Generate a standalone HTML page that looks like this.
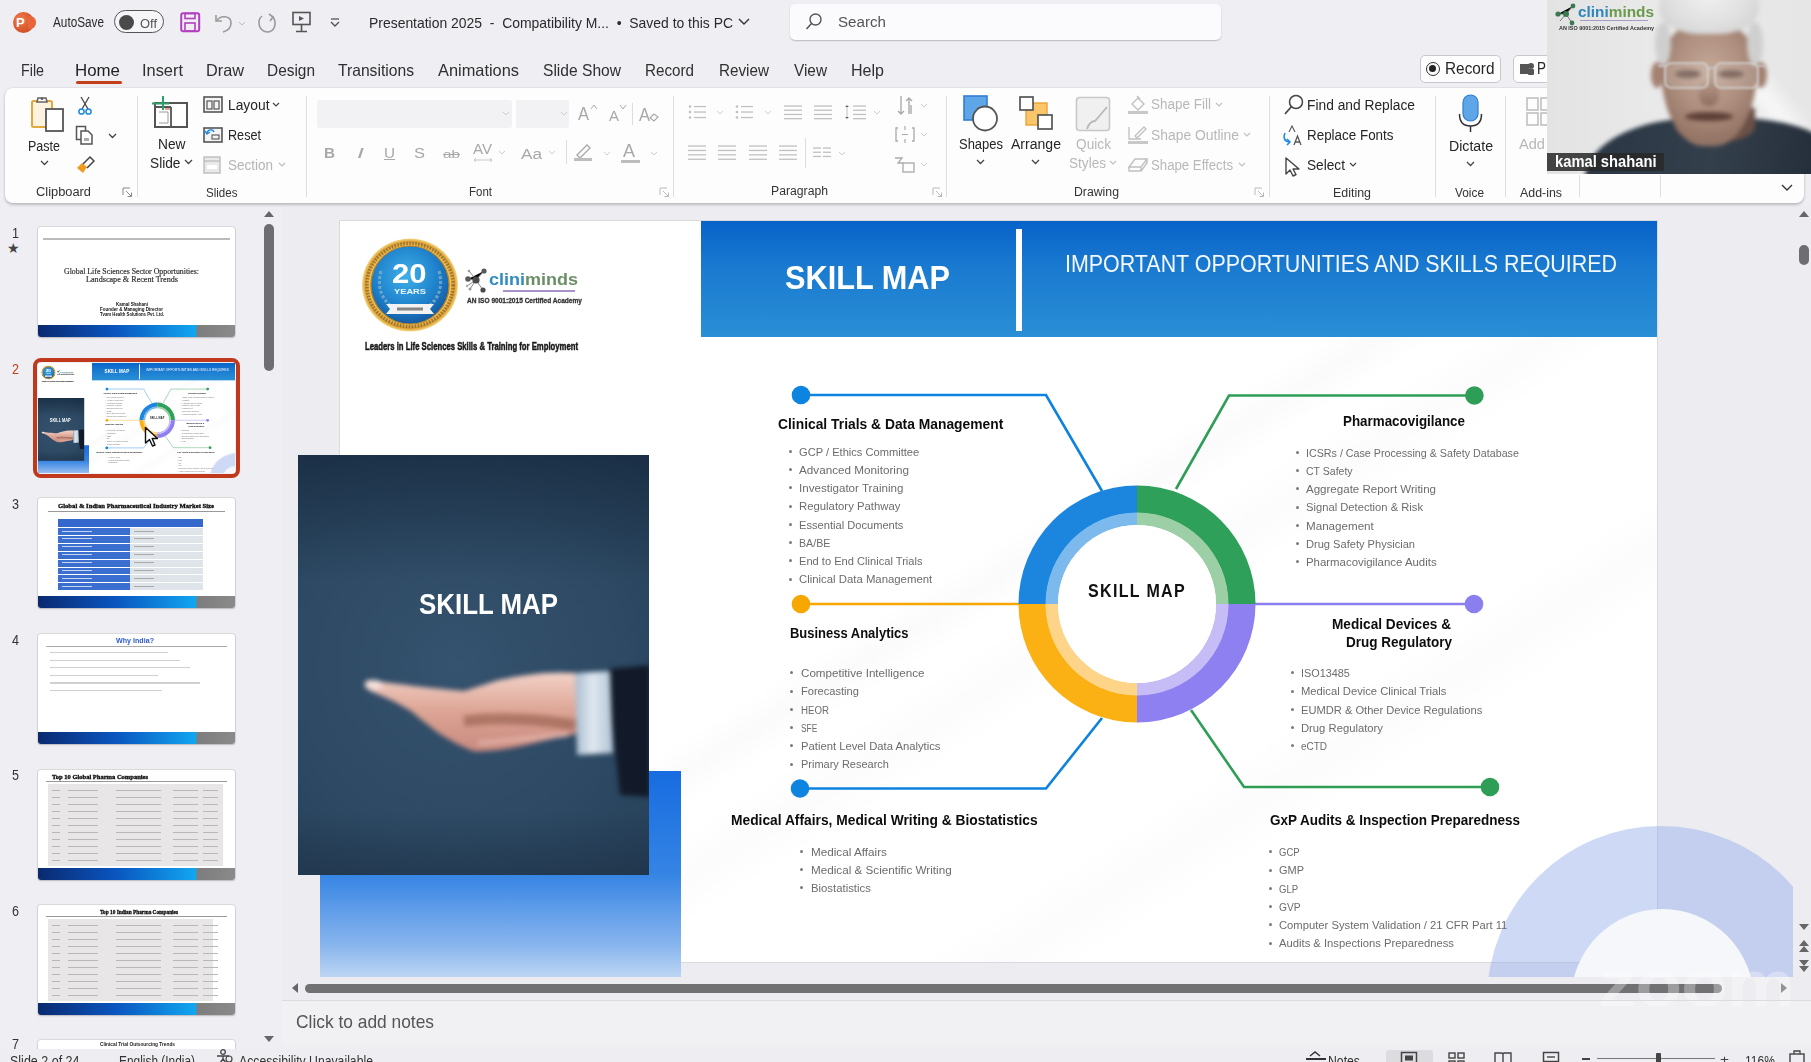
<!DOCTYPE html><html><head><meta charset="utf-8"><style>
*{margin:0;padding:0}
html,body{width:1811px;height:1062px;overflow:hidden;background:#eeeef3;font-family:"Liberation Sans",sans-serif}
.a{position:absolute}
.t{position:absolute;white-space:nowrap;line-height:1;transform-origin:0 0}
</style></head><body><div class="a" style="left:0;top:0;width:1811px;height:1062px;background:#eeeef3"></div><div class="a" style="left:13px;top:12px;width:21px;height:21px;border-radius:50%;background:radial-gradient(circle at 35% 35%,#f27a4a,#c4401a)"></div><div class="a" style="left:28px;top:16px;width:8px;height:13px;border-radius:0 6px 6px 0;background:#e8643a"></div><span class="a" style="left:16px;top:13px;font:bold 13px/19px 'Liberation Sans';color:#fff">P</span><span class="t" id="x52" style="transform:scaleX(0.8522);left:53.0px;top:16.3px;font-size:13.81px;color:#2b2b2b;">AutoSave</span><div class="a" style="left:114px;top:10px;width:48px;height:21px;border:1.5px solid #555;border-radius:12px;background:#f6f6f9"></div><div class="a" style="left:119px;top:14.5px;width:15px;height:15px;border-radius:50%;background:#4a4a4a"></div><span class="t" id="x53" style="transform:scaleX(0.9873);left:140.0px;top:16.9px;font-size:13.08px;color:#555;">Off</span><svg class="a" style="left:180px;top:12px" width="22" height="21"><rect x="1.2" y="1.2" width="18" height="18" rx="2" fill="none" stroke="#b23fc0" stroke-width="2"/><rect x="5" y="1.5" width="10" height="5" fill="none" stroke="#b23fc0" stroke-width="1.6"/><rect x="5" y="11" width="10" height="8" fill="none" stroke="#b23fc0" stroke-width="1.6"/></svg><svg class="a" style="left:212px;top:12px" width="36" height="22"><path d="M4 3 L4 9 L10 9" stroke="#9a9a9a" stroke-width="1.6" fill="none"/><path d="M4.5 9 C8 3,19 3,19 11 C19 16,15 19,11 20" stroke="#9a9a9a" stroke-width="1.6" fill="none"/><path d="M27 10 L30 13 L33 10" stroke="#bbb" stroke-width="1" fill="none"/></svg><svg class="a" style="left:256px;top:11px" width="24" height="24"><path d="M6 5 C1 9,2 20,11 21 C19 21,21 12,17 6" stroke="#9a9a9a" stroke-width="1.6" fill="none"/><path d="M13 3 L17 6 L14 10" stroke="#9a9a9a" stroke-width="1.6" fill="none"/></svg><svg class="a" style="left:291px;top:11px" width="22" height="22"><rect x="2" y="1.5" width="17" height="12" fill="none" stroke="#555" stroke-width="1.6"/><path d="M8 5 L13 7.5 L8 10Z" fill="#555"/><path d="M10.5 14 L10.5 20 M5 20.5 L16 20.5" stroke="#555" stroke-width="1.6"/></svg><svg class="a" style="left:329px;top:17px" width="12" height="12"><path d="M2 2 L10 2" stroke="#555" stroke-width="1.3"/><path d="M2 5 L6 9 L10 5" stroke="#555" stroke-width="1.4" fill="none"/></svg><span class="t" id="x54" style="transform:scaleX(0.9303);left:368.5px;top:15.8px;font-size:14.97px;color:#2b2b2b;">Presentation 2025&nbsp; -&nbsp; Compatibility M...&nbsp; •&nbsp; Saved to this PC</span><svg class="a" style="left:738.0px;top:18.0px" width="12" height="8"><path d="M1 1 L6.0 6.0 L11.0 1" stroke="#333" stroke-width="1.4" fill="none"/></svg><div class="a" style="left:790px;top:4px;width:431px;height:36px;border-radius:5px;background:#fbfbfd;box-shadow:0 1px 1.5px rgba(0,0,0,.22)"></div><svg class="a" style="left:804px;top:12px" width="20" height="20"><circle cx="11.5" cy="7.5" r="5.5" stroke="#555" stroke-width="1.4" fill="none"/><path d="M7.5 11.5 L2.5 17" stroke="#555" stroke-width="1.5"/></svg><span class="t" id="x55" style="transform:scaleX(0.9932);left:837.5px;top:14.1px;font-size:15.26px;color:#555;">Search</span><span class="t" id="x56" style="transform:scaleX(0.8772);left:21.0px;top:61.7px;font-size:16.28px;color:#303030;">File</span><span class="t" id="x57" style="transform:scaleX(1.0371);left:75.0px;top:61.7px;font-size:16.28px;color:#1f1f1f;">Home</span><span class="t" id="x58" style="transform:scaleX(1.0077);left:142.0px;top:61.7px;font-size:16.28px;color:#303030;">Insert</span><span class="t" id="x59" style="transform:scaleX(1.0008);left:206.0px;top:61.7px;font-size:16.28px;color:#303030;">Draw</span><span class="t" id="x60" style="transform:scaleX(0.9479);left:267.0px;top:61.7px;font-size:16.28px;color:#303030;">Design</span><span class="t" id="x61" style="transform:scaleX(0.9626);left:338.0px;top:61.7px;font-size:16.28px;color:#303030;">Transitions</span><span class="t" id="x62" style="transform:scaleX(1.0066);left:438.0px;top:61.7px;font-size:16.28px;color:#303030;">Animations</span><span class="t" id="x63" style="transform:scaleX(0.9583);left:543.0px;top:61.7px;font-size:16.28px;color:#303030;">Slide Show</span><span class="t" id="x64" style="transform:scaleX(0.9344);left:645.0px;top:61.7px;font-size:16.28px;color:#303030;">Record</span><span class="t" id="x65" style="transform:scaleX(0.9373);left:719.0px;top:61.7px;font-size:16.28px;color:#303030;">Review</span><span class="t" id="x66" style="transform:scaleX(0.9437);left:794.0px;top:61.7px;font-size:16.28px;color:#303030;">View</span><span class="t" id="x67" style="transform:scaleX(0.9865);left:851.0px;top:61.7px;font-size:16.28px;color:#303030;">Help</span><div class="a" style="left:75.5px;top:81px;width:46px;height:3px;border-radius:2px;background:#c43e1c"></div><div class="a" style="left:1420px;top:55px;width:81px;height:28px;border-radius:5px;border:1px solid #c8c8cc;background:#fdfdfd;box-sizing:border-box"></div><div class="a" style="left:1425.5px;top:61.5px;width:14px;height:14px;border-radius:50%;border:1.5px solid #333;box-sizing:border-box"></div><div class="a" style="left:1429px;top:65px;width:7px;height:7px;border-radius:50%;background:#222"></div><span class="t" id="x68" style="transform:scaleX(0.9606);left:1445.0px;top:61.0px;font-size:15.99px;color:#262626;">Record</span><div class="a" style="left:1513px;top:55px;width:40px;height:28px;border-radius:5px;border:1px solid #c8c8cc;background:#fdfdfd;box-sizing:border-box"></div><svg class="a" style="left:1519px;top:61px" width="16" height="16"><rect x="1" y="3" width="9" height="10" fill="#555"/><circle cx="12" cy="5" r="3" fill="#555"/><rect x="9" y="8" width="6" height="6" rx="1" fill="#555"/></svg><span class="t" id="x69" style="transform:scaleX(0.8433);left:1537.0px;top:61.0px;font-size:15.99px;color:#262626;">P</span><div class="a" style="left:282px;top:205px;width:1529px;height:795px;background:#ededf1"></div><div class="a" style="left:282px;top:1001px;width:1529px;height:44px;background:#f1f1f4"></div><div class="a" style="left:0;top:205px;width:282px;height:840px;background:#efeff3"></div><div class="a" style="left:282px;top:205px;width:1511px;height:772px;overflow:hidden"><div class="a" style="left:58px;top:16px;width:1317px;height:741px;box-shadow:0 0 0 1px rgba(0,0,0,.08)"><div class="a" style="left:0;top:0;width:1317px;height:741px;background:#fff;overflow:hidden"><div class="a" style="left:-200px;top:300px;width:1800px;height:60px;transform:rotate(-32deg);background:linear-gradient(rgba(230,232,238,0),rgba(228,230,236,.18),rgba(230,232,238,0))"></div><div class="a" style="left:200px;top:420px;width:1800px;height:90px;transform:rotate(-32deg);background:linear-gradient(rgba(230,232,238,0),rgba(230,232,238,.15),rgba(230,232,238,0))"></div><div class="a" style="left:-400px;top:520px;width:1800px;height:80px;transform:rotate(-32deg);background:linear-gradient(rgba(230,232,238,0),rgba(230,232,238,.15),rgba(230,232,238,0))"></div></div><div class="a" style="left:1147px;top:605px;width:348px;height:348px;border-radius:50%;background:rgba(150,175,235,.47)"></div><div class="a" style="left:1230.5px;top:687.5px;width:183px;height:183px;border-radius:50%;background:#f6f7fa"></div><div class="a" style="left:361px;top:0;width:956px;height:116px;background:linear-gradient(#0763c9,#1a7ad0 40%,#2a8fd6)"></div><div class="a" style="left:676px;top:8px;width:6px;height:102px;background:#fff"></div><span class="t" id="x1" style="transform:scaleX(0.9073);left:445.0px;top:39.6px;font-size:33.87px;color:#fff;font-weight:bold;">SKILL MAP</span><span class="t" id="x2" style="transform:scaleX(0.9215);left:724.6px;top:32.1px;font-size:23.26px;color:#f4f8ff;">IMPORTANT OPPORTUNITIES AND SKILLS REQUIRED</span><svg class="a" style="left:20.7px;top:14.7px" width="98" height="98"><defs><radialGradient id="gold" cx="50%" cy="50%" r="50%"><stop offset=".78" stop-color="#b87a1a"/><stop offset=".84" stop-color="#f0c460"/><stop offset=".93" stop-color="#d89a30"/><stop offset="1" stop-color="#f6dc8a"/></radialGradient><radialGradient id="blu" cx="45%" cy="38%" r="60%"><stop offset="0" stop-color="#3fb0ea"/><stop offset=".7" stop-color="#1d7fca"/><stop offset="1" stop-color="#155fa6"/></radialGradient></defs><ellipse cx="49" cy="49" rx="48" ry="46.5" fill="url(#gold)"/><ellipse cx="49" cy="49" rx="43" ry="41.5" fill="none" stroke="#6a4a18" stroke-width="3.5" stroke-dasharray="1.6 1.4" opacity=".55"/><circle cx="49" cy="49" r="39" fill="url(#blu)" stroke="#b8801e" stroke-width="1.2"/><path d="M20 35 C16 50,20 62,30 70" stroke="#8fb7c8" stroke-width="3" fill="none" stroke-dasharray="3 2" opacity=".7"/><path d="M78 35 C82 50,78 62,68 70" stroke="#8fb7c8" stroke-width="3" fill="none" stroke-dasharray="3 2" opacity=".7"/><path d="M25 68 L73 68 L69 73 L73 78 L25 78 L29 73Z" fill="#f2f2f2"/><rect x="36" y="71.5" width="26" height="3" fill="#555" opacity=".7"/></svg><span class="t" id="x3" style="transform:scaleX(1.1263);left:52.0px;top:38.6px;font-size:27.62px;color:#fff;font-weight:bold;">20</span><span class="t" id="x4" style="transform:scaleX(1.4212);left:54.0px;top:68.0px;font-size:6.54px;color:#eaf4ff;font-weight:bold;">YEARS</span><svg class="a" style="left:124px;top:45px" width="30" height="32"><g stroke="#8a8a8a" stroke-width="1"><path d="M4 13 L12 14 L20 5 M12 14 L19 24 M12 14 L6 23 M5 5 L10 11 M12 14 L3 20"/></g><circle cx="4" cy="13" r="2.8" fill="#5a5a5a"/><circle cx="12" cy="14" r="3.6" fill="#4a4a4a"/><circle cx="20" cy="5" r="2.6" fill="#5a5a5a"/><circle cx="19" cy="24" r="2.6" fill="#4a4a4a"/><circle cx="6" cy="23" r="1.5" fill="#999"/><circle cx="5" cy="5" r="1.3" fill="#999"/><circle cx="3" cy="20" r="1.2" fill="#aaa"/></svg><span class="t" id="x5" style="transform:scaleX(1.0772);left:149.4px;top:50.6px;font-size:16.72px;color:#3d8db5;font-weight:bold;"><span style="color:#2f8cc0">clini</span><span style="color:#6a8f66">minds</span></span><div class="a" style="left:163px;top:69px;width:72px;height:1.5px;background:#8a6fb8;opacity:.75"></div><span class="t" id="x6" style="transform:scaleX(0.9031);left:127.0px;top:76.3px;font-size:7.27px;color:#333;font-weight:bold;-webkit-text-stroke:.3px #333;">AN ISO 9001:2015 Certified Academy</span><span class="t" id="x7" style="transform:scaleX(0.7081);left:24.5px;top:120.4px;font-size:10.90px;color:#1a1a1a;font-weight:bold;-webkit-text-stroke:.5px #1a1a1a;">Leaders in Life Sciences Skills &amp; Training for Employment</span><div class="a" style="left:-20px;top:550px;width:360.5px;height:206px;background:linear-gradient(#176ce0,#3584e4 50%,#8ab6ee 85%,#bcd5f2)"></div><div class="a" style="left:-42.2px;top:234px;width:351.5px;height:420px;overflow:hidden;background:radial-gradient(ellipse 80% 70% at 45% 50%,#35526e,#2d4963 60%,#263f58)"><div class="a" style="left:0;top:0;width:351.5px;height:420px;background:linear-gradient(rgba(18,36,56,.6),rgba(18,36,56,0) 30%,rgba(18,36,56,0) 85%,rgba(18,32,50,.3))"></div><svg class="a" style="left:0;top:0;filter:blur(2.4px)" width="352" height="420"><defs><linearGradient id="hg" x1="0" y1="0" x2="0" y2="1"><stop offset="0" stop-color="#f3d2c8"/><stop offset=".5" stop-color="#dca494"/><stop offset="1" stop-color="#c98a80"/></linearGradient><linearGradient id="cg" x1="0" y1="0" x2="1" y2="0"><stop offset="0" stop-color="#a9bccf"/><stop offset=".45" stop-color="#dfe8f0"/><stop offset="1" stop-color="#b4c4d4"/></linearGradient></defs><path d="M310 214 L352 210 L352 342 L322 340 C318 300,312 260,310 214Z" fill="#121a29"/><path d="M70 225 C90 228,140 234,166 236 C180 232,190 228,201 225 C225 220,250 216,278 218 L278 279 C250 284,225 292,201 295 C190 296,180 297,175 296 C160 290,150 284,139 277 C128 268,120 262,113 256 C100 248,88 242,77 238 C66 234,64 228,70 225Z" fill="url(#hg)"/><path d="M166 266 C200 262,240 264,277 270" stroke="#8a5442" stroke-width="11" fill="none" opacity=".55"/><path d="M180 288 C210 286,240 282,270 280" stroke="#f0c8c0" stroke-width="4" fill="none" opacity=".6"/><ellipse cx="76" cy="230" rx="9" ry="5" fill="#f4e0dc"/><path d="M277 218 L312 216 L315 298 L279 300Z" fill="url(#cg)"/></svg></div><span class="t" id="x8" style="transform:scaleX(0.8773);left:78.6px;top:368.0px;font-size:29.51px;color:#fff;font-weight:bold;">SKILL MAP</span><svg class="a" style="left:0;top:0;overflow:visible" width="1317" height="741"><polyline points="461.0,174.0 706.0,174.0 762.0,270.0" fill="none" stroke="#0d82de" stroke-width="2.6" stroke-linejoin="miter"/><polyline points="1134.4,174.5 889.0,174.5 836.0,268.0" fill="none" stroke="#2e9e56" stroke-width="2.6" stroke-linejoin="miter"/><polyline points="461.0,383.0 690.0,383.0" fill="none" stroke="#f6a800" stroke-width="2.6" stroke-linejoin="miter"/><polyline points="905.0,383.0 1134.0,383.0" fill="none" stroke="#8b7ff0" stroke-width="2.6" stroke-linejoin="miter"/><polyline points="460.0,567.5 706.0,567.5 762.0,497.0" fill="none" stroke="#0d82de" stroke-width="2.6" stroke-linejoin="miter"/><polyline points="1150.0,566.0 904.0,566.0 851.0,489.0" fill="none" stroke="#2e9e56" stroke-width="2.6" stroke-linejoin="miter"/><circle cx="461.0" cy="174.0" r="9.3" fill="#0d84e0"/><circle cx="1134.4" cy="174.5" r="9.3" fill="#2e9e56"/><circle cx="461.0" cy="383.0" r="9.3" fill="#f6a800"/><circle cx="1134.0" cy="383.0" r="9.3" fill="#8b7ff0"/><circle cx="460.0" cy="567.5" r="9.3" fill="#0d84e0"/><circle cx="1150.0" cy="566.0" r="9.3" fill="#2e9e56"/><path d="M678.50 383.00 A118.5 118.5 0 0 1 797.00 264.50 L797.00 292.00 A91.0 91.0 0 0 0 706.00 383.00 Z" fill="#1c86df"/><path d="M797.00 264.50 A118.5 118.5 0 0 1 915.50 383.00 L888.00 383.00 A91.0 91.0 0 0 0 797.00 292.00 Z" fill="#2ea05a"/><path d="M797.00 501.50 A118.5 118.5 0 0 1 678.50 383.00 L706.00 383.00 A91.0 91.0 0 0 0 797.00 474.00 Z" fill="#fbb014"/><path d="M915.50 383.00 A118.5 118.5 0 0 1 797.00 501.50 L797.00 474.00 A91.0 91.0 0 0 0 888.00 383.00 Z" fill="#8e80f1"/><path d="M705.50 383.00 A91.5 91.5 0 0 1 797.00 291.50 L797.00 304.00 A79.0 79.0 0 0 0 718.00 383.00 Z" fill="#7cbaed"/><path d="M797.00 291.50 A91.5 91.5 0 0 1 888.50 383.00 L876.00 383.00 A79.0 79.0 0 0 0 797.00 304.00 Z" fill="#9ccfa6"/><path d="M797.00 474.50 A91.5 91.5 0 0 1 705.50 383.00 L718.00 383.00 A79.0 79.0 0 0 0 797.00 462.00 Z" fill="#fdd488"/><path d="M888.50 383.00 A91.5 91.5 0 0 1 797.00 474.50 L797.00 462.00 A79.0 79.0 0 0 0 876.00 383.00 Z" fill="#c6bdf6"/><circle cx="797" cy="383" r="79" fill="#fff"/></svg><span class="t" id="x9" style="transform:scaleX(0.8768);left:747.5px;top:361.1px;font-size:18.31px;color:#111;font-weight:bold;letter-spacing:1.5px;">SKILL MAP</span><span class="t" id="x10" style="transform:scaleX(0.9331);left:438.4px;top:196.1px;font-size:14.83px;color:#0d0d0d;font-weight:bold;">Clinical Trials &amp; Data Management</span><div class="a" style="left:448.5px;top:228.8px;width:3px;height:3px;border-radius:50%;background:#7a7a7a"></div><span class="t" id="x11" style="transform:scaleX(1.0472);left:459.0px;top:225.5px;font-size:10.61px;color:#6c6c6c;">GCP / Ethics Committee</span><div class="a" style="left:448.5px;top:247.1px;width:3px;height:3px;border-radius:50%;background:#7a7a7a"></div><span class="t" id="x12" style="transform:scaleX(1.1036);left:459.0px;top:243.8px;font-size:10.61px;color:#6c6c6c;">Advanced Monitoring</span><div class="a" style="left:448.5px;top:265.3px;width:3px;height:3px;border-radius:50%;background:#7a7a7a"></div><span class="t" id="x13" style="transform:scaleX(1.0927);left:459.0px;top:262.0px;font-size:10.61px;color:#6c6c6c;">Investigator Training</span><div class="a" style="left:448.5px;top:283.6px;width:3px;height:3px;border-radius:50%;background:#7a7a7a"></div><span class="t" id="x14" style="transform:scaleX(1.0679);left:459.0px;top:280.3px;font-size:10.61px;color:#6c6c6c;">Regulatory Pathway</span><div class="a" style="left:448.5px;top:301.8px;width:3px;height:3px;border-radius:50%;background:#7a7a7a"></div><span class="t" id="x15" style="transform:scaleX(1.0476);left:459.0px;top:298.5px;font-size:10.61px;color:#6c6c6c;">Essential Documents</span><div class="a" style="left:448.5px;top:320.0px;width:3px;height:3px;border-radius:50%;background:#7a7a7a"></div><span class="t" id="x16" style="transform:scaleX(1.0043);left:459.0px;top:316.8px;font-size:10.61px;color:#6c6c6c;">BA/BE</span><div class="a" style="left:448.5px;top:338.3px;width:3px;height:3px;border-radius:50%;background:#7a7a7a"></div><span class="t" id="x17" style="transform:scaleX(1.0472);left:459.0px;top:335.0px;font-size:10.61px;color:#6c6c6c;">End to End Clinical Trials</span><div class="a" style="left:448.5px;top:356.5px;width:3px;height:3px;border-radius:50%;background:#7a7a7a"></div><span class="t" id="x18" style="transform:scaleX(1.0704);left:459.0px;top:353.3px;font-size:10.61px;color:#6c6c6c;">Clinical Data Management</span><span class="t" id="x19" style="transform:scaleX(0.9026);left:1003.0px;top:192.5px;font-size:14.83px;color:#0d0d0d;font-weight:bold;">Pharmacovigilance</span><div class="a" style="left:956.0px;top:229.9px;width:3px;height:3px;border-radius:50%;background:#7a7a7a"></div><span class="t" id="x20" style="transform:scaleX(1.0085);left:966.0px;top:226.6px;font-size:10.61px;color:#6c6c6c;">ICSRs / Case Processing &amp; Safety Database</span><div class="a" style="left:956.0px;top:248.2px;width:3px;height:3px;border-radius:50%;background:#7a7a7a"></div><span class="t" id="x21" style="transform:scaleX(0.9918);left:966.0px;top:244.9px;font-size:10.61px;color:#6c6c6c;">CT Safety</span><div class="a" style="left:956.0px;top:266.4px;width:3px;height:3px;border-radius:50%;background:#7a7a7a"></div><span class="t" id="x22" style="transform:scaleX(1.0876);left:966.0px;top:263.1px;font-size:10.61px;color:#6c6c6c;">Aggregate Report Writing</span><div class="a" style="left:956.0px;top:284.7px;width:3px;height:3px;border-radius:50%;background:#7a7a7a"></div><span class="t" id="x23" style="transform:scaleX(1.0552);left:966.0px;top:281.4px;font-size:10.61px;color:#6c6c6c;">Signal Detection &amp; Risk</span><div class="a" style="left:956.0px;top:302.9px;width:3px;height:3px;border-radius:50%;background:#7a7a7a"></div><span class="t" id="x24" style="transform:scaleX(1.0947);left:966.0px;top:299.6px;font-size:10.61px;color:#6c6c6c;">Management</span><div class="a" style="left:956.0px;top:321.1px;width:3px;height:3px;border-radius:50%;background:#7a7a7a"></div><span class="t" id="x25" style="transform:scaleX(1.0443);left:966.0px;top:317.9px;font-size:10.61px;color:#6c6c6c;">Drug Safety Physician</span><div class="a" style="left:956.0px;top:339.4px;width:3px;height:3px;border-radius:50%;background:#7a7a7a"></div><span class="t" id="x26" style="transform:scaleX(1.0749);left:966.0px;top:336.1px;font-size:10.61px;color:#6c6c6c;">Pharmacovigilance Audits</span><span class="t" id="x27" style="transform:scaleX(0.8749);left:449.5px;top:404.5px;font-size:14.83px;color:#0d0d0d;font-weight:bold;">Business Analytics</span><div class="a" style="left:450.0px;top:450.3px;width:3px;height:3px;border-radius:50%;background:#7a7a7a"></div><span class="t" id="x28" style="transform:scaleX(1.0964);left:461.0px;top:447.0px;font-size:10.61px;color:#6c6c6c;">Competitive Intelligence</span><div class="a" style="left:450.0px;top:468.5px;width:3px;height:3px;border-radius:50%;background:#7a7a7a"></div><span class="t" id="x29" style="transform:scaleX(1.0426);left:461.0px;top:465.3px;font-size:10.61px;color:#6c6c6c;">Forecasting</span><div class="a" style="left:450.0px;top:486.8px;width:3px;height:3px;border-radius:50%;background:#7a7a7a"></div><span class="t" id="x30" style="transform:scaleX(0.9134);left:461.0px;top:483.5px;font-size:10.61px;color:#6c6c6c;">HEOR</span><div class="a" style="left:450.0px;top:505.0px;width:3px;height:3px;border-radius:50%;background:#7a7a7a"></div><span class="t" id="x31" style="transform:scaleX(0.7897);left:461.0px;top:501.8px;font-size:10.61px;color:#6c6c6c;">SFE</span><div class="a" style="left:450.0px;top:523.3px;width:3px;height:3px;border-radius:50%;background:#7a7a7a"></div><span class="t" id="x32" style="transform:scaleX(1.0607);left:461.0px;top:520.0px;font-size:10.61px;color:#6c6c6c;">Patient Level Data Analytics</span><div class="a" style="left:450.0px;top:541.5px;width:3px;height:3px;border-radius:50%;background:#7a7a7a"></div><span class="t" id="x33" style="transform:scaleX(1.0353);left:461.0px;top:538.3px;font-size:10.61px;color:#6c6c6c;">Primary Research</span><span class="t" id="x34" style="transform:scaleX(0.9302);left:391.0px;top:591.5px;font-size:14.83px;color:#0d0d0d;font-weight:bold;">Medical Affairs, Medical Writing &amp; Biostatistics</span><div class="a" style="left:460.2px;top:628.9px;width:3px;height:3px;border-radius:50%;background:#7a7a7a"></div><span class="t" id="x35" style="transform:scaleX(1.1032);left:470.5px;top:625.6px;font-size:10.61px;color:#6c6c6c;">Medical Affairs</span><div class="a" style="left:460.2px;top:647.1px;width:3px;height:3px;border-radius:50%;background:#7a7a7a"></div><span class="t" id="x36" style="transform:scaleX(1.1014);left:470.5px;top:643.9px;font-size:10.61px;color:#6c6c6c;">Medical &amp; Scientific Writing</span><div class="a" style="left:460.2px;top:665.4px;width:3px;height:3px;border-radius:50%;background:#7a7a7a"></div><span class="t" id="x37" style="transform:scaleX(1.0676);left:470.5px;top:662.1px;font-size:10.61px;color:#6c6c6c;">Biostatistics</span><span class="t" id="x38" style="transform:scaleX(0.9196);left:992.0px;top:395.5px;font-size:14.83px;color:#0d0d0d;font-weight:bold;">Medical Devices &amp;</span><span class="t" id="x39" style="transform:scaleX(0.9124);left:1005.6px;top:414.0px;font-size:14.83px;color:#0d0d0d;font-weight:bold;">Drug Regulatory</span><div class="a" style="left:950.5px;top:450.3px;width:3px;height:3px;border-radius:50%;background:#7a7a7a"></div><span class="t" id="x40" style="transform:scaleX(1.0213);left:961.0px;top:447.0px;font-size:10.61px;color:#6c6c6c;">ISO13485</span><div class="a" style="left:950.5px;top:468.5px;width:3px;height:3px;border-radius:50%;background:#7a7a7a"></div><span class="t" id="x41" style="transform:scaleX(1.0577);left:961.0px;top:465.3px;font-size:10.61px;color:#6c6c6c;">Medical Device Clinical Trials</span><div class="a" style="left:950.5px;top:486.8px;width:3px;height:3px;border-radius:50%;background:#7a7a7a"></div><span class="t" id="x42" style="transform:scaleX(1.0488);left:961.0px;top:483.5px;font-size:10.61px;color:#6c6c6c;">EUMDR &amp; Other Device Regulations</span><div class="a" style="left:950.5px;top:505.0px;width:3px;height:3px;border-radius:50%;background:#7a7a7a"></div><span class="t" id="x43" style="transform:scaleX(1.0602);left:961.0px;top:501.8px;font-size:10.61px;color:#6c6c6c;">Drug Regulatory</span><div class="a" style="left:950.5px;top:523.3px;width:3px;height:3px;border-radius:50%;background:#7a7a7a"></div><span class="t" id="x44" style="transform:scaleX(0.9416);left:961.0px;top:520.0px;font-size:10.61px;color:#6c6c6c;">eCTD</span><span class="t" id="x45" style="transform:scaleX(0.9111);left:930.0px;top:591.5px;font-size:14.83px;color:#0d0d0d;font-weight:bold;">GxP Audits &amp; Inspection Preparedness</span><div class="a" style="left:929.2px;top:629.3px;width:3px;height:3px;border-radius:50%;background:#7a7a7a"></div><span class="t" id="x46" style="transform:scaleX(0.8957);left:939.4px;top:626.0px;font-size:10.61px;color:#6c6c6c;">GCP</span><div class="a" style="left:929.2px;top:647.5px;width:3px;height:3px;border-radius:50%;background:#7a7a7a"></div><span class="t" id="x47" style="transform:scaleX(1.0343);left:939.4px;top:644.3px;font-size:10.61px;color:#6c6c6c;">GMP</span><div class="a" style="left:929.2px;top:665.8px;width:3px;height:3px;border-radius:50%;background:#7a7a7a"></div><span class="t" id="x48" style="transform:scaleX(0.9042);left:939.4px;top:662.5px;font-size:10.61px;color:#6c6c6c;">GLP</span><div class="a" style="left:929.2px;top:684.0px;width:3px;height:3px;border-radius:50%;background:#7a7a7a"></div><span class="t" id="x49" style="transform:scaleX(0.9640);left:939.4px;top:680.8px;font-size:10.61px;color:#6c6c6c;">GVP</span><div class="a" style="left:929.2px;top:702.3px;width:3px;height:3px;border-radius:50%;background:#7a7a7a"></div><span class="t" id="x50" style="transform:scaleX(1.0598);left:939.4px;top:699.0px;font-size:10.61px;color:#6c6c6c;">Computer System Validation / 21 CFR Part 11</span><div class="a" style="left:929.2px;top:720.5px;width:3px;height:3px;border-radius:50%;background:#7a7a7a"></div><span class="t" id="x51" style="transform:scaleX(1.0597);left:939.4px;top:717.3px;font-size:10.61px;color:#6c6c6c;">Audits &amp; Inspections Preparedness</span></div></div><div class="a" style="left:5px;top:88px;width:1799px;height:115px;border-radius:8px;background:#fdfdfe;box-shadow:0 1.5px 3px rgba(0,0,0,.2),0 0 0 .5px rgba(0,0,0,.05)"></div><svg class="a" style="left:30.0px;top:96.0px" width="36" height="38"><rect x="2" y="5" width="20" height="26" rx="1.5" fill="#fbf3df" stroke="#e0a93a" stroke-width="2"/><path d="M7 6 L8 2 L16 2 L17 6Z" fill="#fff" stroke="#666" stroke-width="1.6"/><circle cx="12" cy="2.5" r="1.5" fill="#666"/><rect x="16" y="13" width="17" height="22" fill="#fff" stroke="#555" stroke-width="1.8"/></svg><span class="t" id="x70" style="transform:scaleX(0.8438);left:28.0px;top:138.5px;font-size:14.83px;color:#262626;">Paste</span><svg class="a" style="left:39.5px;top:160.0px" width="9" height="6"><path d="M1 1 L4.5 4.5 L8.0 1" stroke="#444" stroke-width="1.3" fill="none"/></svg><svg class="a" style="left:77.0px;top:96.0px" width="16" height="20"><path d="M4 1 L11 13 M12 1 L5 13" stroke="#444" stroke-width="1.3"/><circle cx="4.5" cy="15.5" r="2.6" stroke="#1e88e5" stroke-width="1.5" fill="none"/><circle cx="11.5" cy="15.5" r="2.6" stroke="#1e88e5" stroke-width="1.5" fill="none"/></svg><svg class="a" style="left:75.0px;top:125.0px" width="20" height="21"><rect x="1.5" y="1.5" width="9" height="13" fill="#fff" stroke="#555" stroke-width="1.5"/><path d="M6 6 L13 6 L17 10 L17 19 L6 19Z" fill="#fff" stroke="#555" stroke-width="1.5"/><rect x="9" y="13" width="5" height="3" fill="#aaa"/></svg><svg class="a" style="left:108.0px;top:133.0px" width="9" height="6"><path d="M1 1 L4.5 4.5 L8.0 1" stroke="#444" stroke-width="1.3" fill="none"/></svg><svg class="a" style="left:75.0px;top:155.0px" width="22" height="20"><path d="M2 13 L8 18 L12 12 L7 8Z" fill="#f39a1e"/><path d="M8 9 L15 2 L19 6 L12 13" fill="none" stroke="#444" stroke-width="1.5"/></svg><span class="t" id="x71" style="transform:scaleX(0.9824);left:36.0px;top:185.4px;font-size:13.08px;color:#333;">Clipboard</span><svg class="a" style="left:122.0px;top:187.0px" width="11" height="11"><path d="M1 8 L1 1 L8 1" stroke="#888" stroke-width="1" fill="none"/><path d="M4 4 L9.5 9.5 M5.5 9.5 L9.5 9.5 L9.5 5.5" stroke="#888" stroke-width="1" fill="none"/></svg><div class="a" style="left:137.0px;top:96px;width:1px;height:101px;background:#dedee2"></div><svg class="a" style="left:151.0px;top:95.0px" width="40" height="34"><rect x="4" y="8" width="32" height="24" fill="#fff" stroke="#555" stroke-width="2"/><path d="M4 12 L20 12 M20 12 L20 32" stroke="#555" stroke-width="1.8"/><path d="M8 17 L17 17 L17 28 L8 28" stroke="#999" stroke-width="1" fill="none"/><path d="M12 1 L12 15 M1 8.5 L18 8.5" stroke="#2e9e6a" stroke-width="2"/><path d="M14 14 L19 14" stroke="#d04040" stroke-width="1"/></svg><span class="t" id="x72" style="transform:scaleX(0.9268);left:157.5px;top:136.5px;font-size:14.83px;color:#262626;">New</span><span class="t" id="x73" style="transform:scaleX(0.9247);left:150.0px;top:155.5px;font-size:14.83px;color:#262626;">Slide</span><svg class="a" style="left:184.0px;top:159.0px" width="9" height="6"><path d="M1 1 L4.5 4.5 L8.0 1" stroke="#444" stroke-width="1.3" fill="none"/></svg><svg class="a" style="left:203.0px;top:96.0px" width="20" height="17"><rect x="1" y="1" width="18" height="15" fill="#f4f4f4" stroke="#555" stroke-width="1.6"/><rect x="4" y="5" width="5" height="8" fill="none" stroke="#555" stroke-width="1.2"/><rect x="11" y="5" width="5" height="8" fill="none" stroke="#555" stroke-width="1.2"/></svg><span class="t" id="x74" style="transform:scaleX(0.9319);left:227.5px;top:98.0px;font-size:14.83px;color:#262626;">Layout</span><svg class="a" style="left:272.0px;top:102.0px" width="8" height="6"><path d="M1 1 L4.0 4.0 L7.0 1" stroke="#444" stroke-width="1.2" fill="none"/></svg><svg class="a" style="left:203.0px;top:126.0px" width="20" height="17"><rect x="1" y="2" width="18" height="14" fill="#f4f4f4" stroke="#555" stroke-width="1.6"/><path d="M4 7 C5 3,10 3,11 6" stroke="#1e88e5" stroke-width="1.5" fill="none"/><path d="M2 5 L4 8 L7 6" stroke="#1e88e5" stroke-width="1.4" fill="none"/><rect x="9" y="9" width="7" height="4" fill="none" stroke="#555" stroke-width="1.1"/></svg><span class="t" id="x75" style="transform:scaleX(0.8516);left:228.0px;top:128.0px;font-size:14.83px;color:#262626;">Reset</span><svg class="a" style="left:203.0px;top:156.0px" width="18" height="18"><rect x="1" y="1" width="16" height="16" fill="#e9e9e9" stroke="#c0c0c0" stroke-width="1.5"/><path d="M1 5 L17 5" stroke="#c0c0c0" stroke-width="1.5"/><rect x="4" y="9" width="10" height="4" fill="#fff"/></svg><span class="t" id="x76" style="transform:scaleX(0.9097);left:228.0px;top:158.0px;font-size:14.83px;color:#b5b5b5;">Section</span><svg class="a" style="left:278.0px;top:162.0px" width="8" height="6"><path d="M1 1 L4.0 4.0 L7.0 1" stroke="#bbb" stroke-width="1.1" fill="none"/></svg><span class="t" id="x77" style="transform:scaleX(0.8557);left:205.5px;top:185.6px;font-size:13.52px;color:#333;">Slides</span><div class="a" style="left:306.0px;top:96px;width:1px;height:101px;background:#dedee2"></div><div class="a" style="left:317px;top:100px;width:195px;height:28px;border-radius:3px;background:#f2f2f4"></div><svg class="a" style="left:502.0px;top:111.0px" width="8" height="6"><path d="M1 1 L4.0 4.0 L7.0 1" stroke="#ccc" stroke-width="1" fill="none"/></svg><div class="a" style="left:516px;top:100px;width:53px;height:28px;border-radius:3px;background:#f2f2f4"></div><svg class="a" style="left:560.0px;top:111.0px" width="8" height="6"><path d="M1 1 L4.0 4.0 L7.0 1" stroke="#ccc" stroke-width="1" fill="none"/></svg><span class="t" id="x78" style="transform:scaleX(0.9450);left:578.0px;top:106.2px;font-size:17.44px;color:#a8a8a8;">A</span><span class="t" id="x79" style="transform:scaleX(1.0323);left:609.0px;top:108.7px;font-size:14.53px;color:#a8a8a8;">A</span><svg class="a" style="left:590.0px;top:104.0px" width="8" height="6"><path d="M1 5 L4 1 L7 5" stroke="#aaa" stroke-width="1" fill="none"/></svg><svg class="a" style="left:619.0px;top:104.0px" width="8" height="6"><path d="M1 1 L4 5 L7 1" stroke="#aaa" stroke-width="1" fill="none"/></svg><div class="a" style="left:632px;top:103px;width:1px;height:22px;background:#ddd"></div><span class="t" id="x80" style="transform:scaleX(0.9450);left:639.0px;top:107.2px;font-size:17.44px;color:#a8a8a8;">A</span><svg class="a" style="left:648.0px;top:112.0px" width="12" height="10"><path d="M2 6 L6 2 L10 5 L6 9Z" fill="none" stroke="#aaa" stroke-width="1.2"/></svg><span class="t" id="x81" style="transform:scaleX(0.9986);left:324.0px;top:145.1px;font-size:15.26px;color:#a8a8a8;font-weight:bold;">B</span><span class="t" id="x82" style="transform:scaleX(1.6471);left:357.0px;top:145.1px;font-size:15.26px;color:#a8a8a8;font-style:italic;">I</span><span class="t" id="x83" style="transform:scaleX(0.9986);left:384.0px;top:145.1px;font-size:15.26px;color:#a8a8a8;text-decoration:underline;">U</span><span class="t" id="x84" style="transform:scaleX(1.0814);left:414.0px;top:145.1px;font-size:15.26px;color:#a8a8a8;">S</span><span class="t" id="x85" style="transform:scaleX(1.3140);left:443.0px;top:148.2px;font-size:11.63px;color:#a8a8a8;text-decoration:line-through;">ab</span><span class="t" id="x86" style="transform:scaleX(1.0925);left:473.0px;top:143.3px;font-size:13.81px;color:#a8a8a8;">AV</span><svg class="a" style="left:473.0px;top:157.0px" width="20" height="6"><path d="M1 3 L19 3 M3 1 L1 3 L3 5 M17 1 L19 3 L17 5" stroke="#bbb" stroke-width=".8" fill="none"/></svg><svg class="a" style="left:498.0px;top:150.0px" width="8" height="6"><path d="M1 1 L4.0 4.0 L7.0 1" stroke="#ccc" stroke-width="1" fill="none"/></svg><span class="t" id="x87" style="transform:scaleX(1.1821);left:521.0px;top:146.7px;font-size:14.53px;color:#a8a8a8;">Aa</span><svg class="a" style="left:548.0px;top:150.0px" width="8" height="6"><path d="M1 1 L4.0 4.0 L7.0 1" stroke="#ccc" stroke-width="1" fill="none"/></svg><div class="a" style="left:566px;top:140px;width:1px;height:24px;background:#ddd"></div><svg class="a" style="left:573.0px;top:142.0px" width="22" height="20"><path d="M4 13 L14 3 L17 6 L7 16Z" fill="none" stroke="#aaa" stroke-width="1.4"/><rect x="1" y="16" width="18" height="3" fill="#bdbdbd"/></svg><svg class="a" style="left:603.0px;top:151.0px" width="8" height="6"><path d="M1 1 L4.0 4.0 L7.0 1" stroke="#ccc" stroke-width="1" fill="none"/></svg><span class="t" id="x88" style="transform:scaleX(1.0309);left:623.0px;top:143.2px;font-size:17.44px;color:#a8a8a8;">A</span><svg class="a" style="left:621.0px;top:159.0px" width="22" height="5"><rect x="0" y="1" width="19" height="3" fill="#bdbdbd"/></svg><svg class="a" style="left:650.0px;top:151.0px" width="8" height="6"><path d="M1 1 L4.0 4.0 L7.0 1" stroke="#ccc" stroke-width="1" fill="none"/></svg><span class="t" id="x89" style="transform:scaleX(0.8788);left:469.0px;top:184.9px;font-size:13.08px;color:#333;">Font</span><svg class="a" style="left:659.0px;top:187.0px" width="11" height="11"><path d="M1 8 L1 1 L8 1" stroke="#bbb" stroke-width="1" fill="none"/><path d="M4 4 L9.5 9.5 M5.5 9.5 L9.5 9.5 L9.5 5.5" stroke="#bbb" stroke-width="1" fill="none"/></svg><div class="a" style="left:673.0px;top:96px;width:1px;height:101px;background:#dedee2"></div><svg class="a" style="left:688.0px;top:104.0px" width="20" height="16"><circle cx="2" cy="2.5" r="1.3" fill="#c0c0c0"/><rect x="6" y="1.9" width="12" height="1.3" fill="#c0c0c0"/><circle cx="2" cy="8.0" r="1.3" fill="#c0c0c0"/><rect x="6" y="7.4" width="12" height="1.3" fill="#c0c0c0"/><circle cx="2" cy="13.5" r="1.3" fill="#c0c0c0"/><rect x="6" y="12.9" width="12" height="1.3" fill="#c0c0c0"/></svg><svg class="a" style="left:716.0px;top:110.0px" width="8" height="6"><path d="M1 1 L4.0 4.0 L7.0 1" stroke="#ccc" stroke-width="1" fill="none"/></svg><svg class="a" style="left:735.0px;top:104.0px" width="20" height="16"><circle cx="2" cy="2.5" r="1.3" fill="#c0c0c0"/><rect x="6" y="1.9" width="12" height="1.3" fill="#c0c0c0"/><circle cx="2" cy="8.0" r="1.3" fill="#c0c0c0"/><rect x="6" y="7.4" width="12" height="1.3" fill="#c0c0c0"/><circle cx="2" cy="13.5" r="1.3" fill="#c0c0c0"/><rect x="6" y="12.9" width="12" height="1.3" fill="#c0c0c0"/></svg><svg class="a" style="left:764.0px;top:110.0px" width="8" height="6"><path d="M1 1 L4.0 4.0 L7.0 1" stroke="#ccc" stroke-width="1" fill="none"/></svg><svg class="a" style="left:784.0px;top:104.0px" width="20" height="16"><rect x="0" y="1.4" width="18" height="1.3" fill="#c0c0c0"/><rect x="0" y="5.6" width="18" height="1.3" fill="#c0c0c0"/><rect x="0" y="9.8" width="18" height="1.3" fill="#c0c0c0"/><rect x="0" y="14.0" width="18" height="1.3" fill="#c0c0c0"/></svg><svg class="a" style="left:814.0px;top:104.0px" width="20" height="16"><rect x="0" y="1.4" width="18" height="1.3" fill="#c0c0c0"/><rect x="0" y="5.6" width="18" height="1.3" fill="#c0c0c0"/><rect x="0" y="9.8" width="18" height="1.3" fill="#c0c0c0"/><rect x="0" y="14.0" width="18" height="1.3" fill="#c0c0c0"/></svg><svg class="a" style="left:844.0px;top:104.0px" width="22" height="16"><path d="M3 1 L3 15 M1 3 L3 1 L5 3 M1 13 L3 15 L5 13" stroke="#c0c0c0" stroke-width="1"/><rect x="9" y="1.4" width="13" height="1.3" fill="#c0c0c0"/><rect x="9" y="5.6" width="13" height="1.3" fill="#c0c0c0"/><rect x="9" y="9.8" width="13" height="1.3" fill="#c0c0c0"/><rect x="9" y="14.0" width="13" height="1.3" fill="#c0c0c0"/></svg><svg class="a" style="left:873.0px;top:110.0px" width="8" height="6"><path d="M1 1 L4.0 4.0 L7.0 1" stroke="#ccc" stroke-width="1" fill="none"/></svg><svg class="a" style="left:688.0px;top:144.0px" width="20" height="16"><rect x="0" y="1.4" width="18" height="1.3" fill="#c0c0c0"/><rect x="0" y="5.8" width="18" height="1.3" fill="#c0c0c0"/><rect x="0" y="10.2" width="18" height="1.3" fill="#c0c0c0"/><rect x="0" y="14.6" width="18" height="1.3" fill="#c0c0c0"/></svg><svg class="a" style="left:718.0px;top:144.0px" width="20" height="16"><rect x="0" y="1.4" width="18" height="1.3" fill="#c0c0c0"/><rect x="0" y="5.8" width="18" height="1.3" fill="#c0c0c0"/><rect x="0" y="10.2" width="18" height="1.3" fill="#c0c0c0"/><rect x="0" y="14.6" width="18" height="1.3" fill="#c0c0c0"/></svg><svg class="a" style="left:749.0px;top:144.0px" width="20" height="16"><rect x="0" y="1.4" width="18" height="1.3" fill="#c0c0c0"/><rect x="0" y="5.8" width="18" height="1.3" fill="#c0c0c0"/><rect x="0" y="10.2" width="18" height="1.3" fill="#c0c0c0"/><rect x="0" y="14.6" width="18" height="1.3" fill="#c0c0c0"/></svg><svg class="a" style="left:779.0px;top:144.0px" width="20" height="16"><rect x="0" y="1.4" width="18" height="1.3" fill="#c0c0c0"/><rect x="0" y="5.8" width="18" height="1.3" fill="#c0c0c0"/><rect x="0" y="10.2" width="18" height="1.3" fill="#c0c0c0"/><rect x="0" y="14.6" width="18" height="1.3" fill="#c0c0c0"/></svg><div class="a" style="left:805px;top:138px;width:1px;height:30px;background:#ddd"></div><svg class="a" style="left:813.0px;top:146.0px" width="20" height="14"><rect x="0" y="1.4" width="8" height="1.3" fill="#c0c0c0"/><rect x="0" y="5.6" width="8" height="1.3" fill="#c0c0c0"/><rect x="0" y="9.8" width="8" height="1.3" fill="#c0c0c0"/><g transform="translate(10,0)"><rect x="0" y="1.4" width="8" height="1.3" fill="#c0c0c0"/><rect x="0" y="5.6" width="8" height="1.3" fill="#c0c0c0"/><rect x="0" y="9.8" width="8" height="1.3" fill="#c0c0c0"/></g></svg><svg class="a" style="left:838.0px;top:151.0px" width="8" height="6"><path d="M1 1 L4.0 4.0 L7.0 1" stroke="#ccc" stroke-width="1" fill="none"/></svg><svg class="a" style="left:896.0px;top:95.0px" width="22" height="22"><path d="M5 1 L5 19 M2 16 L5 19 L8 16 M13 19 L13 3 M10 6 L13 3 L16 6 M15 19 L15 10" stroke="#aaa" stroke-width="1.4" fill="none"/></svg><svg class="a" style="left:920.0px;top:103.0px" width="8" height="6"><path d="M1 1 L4.0 4.0 L7.0 1" stroke="#ccc" stroke-width="1" fill="none"/></svg><svg class="a" style="left:894.0px;top:125.0px" width="22" height="18"><path d="M4 3 L2 3 L2 16 L4 16 M18 3 L20 3 L20 16 L18 16" stroke="#aaa" stroke-width="1.3" fill="none"/><path d="M8 9.5 L14 9.5 M11 1 L11 5 M11 14 L11 18" stroke="#aaa" stroke-width="1.2"/></svg><svg class="a" style="left:920.0px;top:132.0px" width="8" height="6"><path d="M1 1 L4.0 4.0 L7.0 1" stroke="#ccc" stroke-width="1" fill="none"/></svg><svg class="a" style="left:894.0px;top:155.0px" width="22" height="18"><path d="M1 3 L8 3 L4 8 L9 8" stroke="#aaa" stroke-width="1.3" fill="none"/><rect x="9" y="8" width="11" height="9" fill="none" stroke="#aaa" stroke-width="1.3"/></svg><svg class="a" style="left:920.0px;top:162.0px" width="8" height="6"><path d="M1 1 L4.0 4.0 L7.0 1" stroke="#ccc" stroke-width="1" fill="none"/></svg><span class="t" id="x90" style="transform:scaleX(0.9332);left:771.0px;top:184.4px;font-size:13.08px;color:#333;">Paragraph</span><svg class="a" style="left:932.0px;top:187.0px" width="11" height="11"><path d="M1 8 L1 1 L8 1" stroke="#bbb" stroke-width="1" fill="none"/><path d="M4 4 L9.5 9.5 M5.5 9.5 L9.5 9.5 L9.5 5.5" stroke="#bbb" stroke-width="1" fill="none"/></svg><div class="a" style="left:945.5px;top:96px;width:1px;height:101px;background:#dedee2"></div><svg class="a" style="left:961.0px;top:94.0px" width="40" height="40"><rect x="3" y="2" width="23" height="24" fill="#5ea6e8" stroke="#2f7fd0" stroke-width="1.6"/><circle cx="24" cy="24.5" r="12" fill="#fff" stroke="#555" stroke-width="1.8"/></svg><span class="t" id="x91" style="transform:scaleX(0.8748);left:959.0px;top:136.5px;font-size:14.83px;color:#262626;">Shapes</span><svg class="a" style="left:976.0px;top:159.0px" width="9" height="6"><path d="M1 1 L4.5 4.5 L8.0 1" stroke="#444" stroke-width="1.3" fill="none"/></svg><svg class="a" style="left:1017.0px;top:95.0px" width="40" height="40"><rect x="9" y="8" width="21" height="22" fill="#fbc66a" stroke="#e8a23a" stroke-width="1.4"/><rect x="3" y="2" width="13" height="13" fill="#fff" stroke="#555" stroke-width="1.7"/><rect x="21" y="20" width="14" height="14" fill="#fff" stroke="#555" stroke-width="1.7"/></svg><span class="t" id="x92" style="transform:scaleX(0.9476);left:1011.0px;top:136.5px;font-size:14.83px;color:#262626;">Arrange</span><svg class="a" style="left:1031.0px;top:159.0px" width="9" height="6"><path d="M1 1 L4.5 4.5 L8.0 1" stroke="#444" stroke-width="1.3" fill="none"/></svg><svg class="a" style="left:1075.0px;top:96.0px" width="38" height="38"><rect x="1.5" y="1.5" width="33" height="33" rx="3" fill="#f0f0f0" stroke="#c8c8c8" stroke-width="1.6"/><path d="M12 33 C14 27,17 25,20 25 L32 11" stroke="#b8b8b8" stroke-width="1.8" fill="none"/></svg><span class="t" id="x93" style="transform:scaleX(0.9233);left:1076.0px;top:136.5px;font-size:14.83px;color:#b8b8b8;">Quick</span><span class="t" id="x94" style="transform:scaleX(0.9161);left:1069.0px;top:155.5px;font-size:14.83px;color:#b8b8b8;">Styles</span><svg class="a" style="left:1109.0px;top:160.0px" width="8" height="6"><path d="M1 1 L4.0 4.0 L7.0 1" stroke="#c0c0c0" stroke-width="1.1" fill="none"/></svg><svg class="a" style="left:1127.0px;top:95.0px" width="22" height="20"><path d="M5 9 L11 3 L17 9 L11 15Z" fill="none" stroke="#c0c0c0" stroke-width="1.4"/><path d="M10 1 L13 4" stroke="#c0c0c0" stroke-width="1.4"/><rect x="1" y="16" width="20" height="3" fill="#c8c8c8"/></svg><span class="t" id="x95" style="transform:scaleX(0.9100);left:1151.0px;top:97.0px;font-size:14.83px;color:#b8b8b8;">Shape Fill</span><svg class="a" style="left:1215.0px;top:102.0px" width="8" height="6"><path d="M1 1 L4.0 4.0 L7.0 1" stroke="#c0c0c0" stroke-width="1.1" fill="none"/></svg><svg class="a" style="left:1127.0px;top:125.0px" width="22" height="20"><path d="M2 2 L2 14 L14 14" stroke="#c0c0c0" stroke-width="1.3" fill="none"/><path d="M8 11 L17 2 L19 4 L10 13Z" fill="none" stroke="#c0c0c0" stroke-width="1.3"/><rect x="1" y="16" width="20" height="3" fill="#c8c8c8"/></svg><span class="t" id="x96" style="transform:scaleX(0.9363);left:1151.0px;top:127.5px;font-size:14.83px;color:#b8b8b8;">Shape Outline</span><svg class="a" style="left:1243.0px;top:132.0px" width="8" height="6"><path d="M1 1 L4.0 4.0 L7.0 1" stroke="#c0c0c0" stroke-width="1.1" fill="none"/></svg><svg class="a" style="left:1127.0px;top:155.0px" width="22" height="20"><path d="M2 12 L8 4 L20 4 L14 12Z M2 12 L2 16 L14 16 L14 12 M14 16 L20 8 L20 4" stroke="#c0c0c0" stroke-width="1.4" fill="none"/></svg><span class="t" id="x97" style="transform:scaleX(0.8907);left:1151.0px;top:157.5px;font-size:14.83px;color:#b8b8b8;">Shape Effects</span><svg class="a" style="left:1238.0px;top:162.0px" width="8" height="6"><path d="M1 1 L4.0 4.0 L7.0 1" stroke="#c0c0c0" stroke-width="1.1" fill="none"/></svg><span class="t" id="x98" style="transform:scaleX(0.9378);left:1074.0px;top:184.9px;font-size:13.08px;color:#333;">Drawing</span><svg class="a" style="left:1254.0px;top:187.0px" width="11" height="11"><path d="M1 8 L1 1 L8 1" stroke="#bbb" stroke-width="1" fill="none"/><path d="M4 4 L9.5 9.5 M5.5 9.5 L9.5 9.5 L9.5 5.5" stroke="#bbb" stroke-width="1" fill="none"/></svg><div class="a" style="left:1268.5px;top:96px;width:1px;height:101px;background:#dedee2"></div><svg class="a" style="left:1283.0px;top:94.0px" width="22" height="22"><circle cx="13" cy="8" r="6.5" stroke="#444" stroke-width="1.5" fill="none"/><path d="M8.5 12.5 L2 20" stroke="#444" stroke-width="1.7"/></svg><span class="t" id="x99" style="transform:scaleX(0.9292);left:1307.0px;top:98.0px;font-size:14.83px;color:#262626;">Find and Replace</span><svg class="a" style="left:1282.0px;top:125.0px" width="22" height="22"><path d="M7 7 L10 1 L13 7" stroke="#555" stroke-width="1.1" fill="none"/><path d="M12 20 L15.5 11 L19 20 M13 17 L18 17" stroke="#555" stroke-width="1.3" fill="none"/><path d="M3 8 C1 12,2 16,7 17" stroke="#1e88e5" stroke-width="1.6" fill="none"/><path d="M5 14 L8 17 L5 20" stroke="#1e88e5" stroke-width="1.5" fill="none"/></svg><span class="t" id="x100" style="transform:scaleX(0.9047);left:1307.0px;top:128.0px;font-size:14.83px;color:#262626;">Replace Fonts</span><svg class="a" style="left:1284.0px;top:157.0px" width="18" height="20"><path d="M2 1 L2 17 L6 13 L9 19 L12 17.5 L9 12 L15 12Z" fill="#fff" stroke="#444" stroke-width="1.4" stroke-linejoin="round"/></svg><span class="t" id="x101" style="transform:scaleX(0.9219);left:1307.0px;top:158.0px;font-size:14.83px;color:#262626;">Select</span><svg class="a" style="left:1349.0px;top:162.0px" width="8" height="6"><path d="M1 1 L4.0 4.0 L7.0 1" stroke="#444" stroke-width="1.2" fill="none"/></svg><span class="t" id="x102" style="transform:scaleX(0.9195);left:1333.0px;top:185.6px;font-size:13.52px;color:#333;">Editing</span><div class="a" style="left:1435.0px;top:96px;width:1px;height:101px;background:#dedee2"></div><svg class="a" style="left:1458.0px;top:94.0px" width="26" height="40"><rect x="5" y="1" width="15" height="26" rx="7.5" fill="#5ea6e8" stroke="#2f7fd0" stroke-width="1.2"/><path d="M1.5 20 C1.5 28,5 32,12.5 32 C20 32,23.5 28,23.5 20" stroke="#333" stroke-width="1.5" fill="none"/><path d="M12.5 32 L12.5 38" stroke="#333" stroke-width="1.5"/></svg><span class="t" id="x103" style="transform:scaleX(0.9533);left:1449.0px;top:139.0px;font-size:14.83px;color:#262626;">Dictate</span><svg class="a" style="left:1466.0px;top:161.0px" width="9" height="6"><path d="M1 1 L4.5 4.5 L8.0 1" stroke="#444" stroke-width="1.3" fill="none"/></svg><span class="t" id="x104" style="transform:scaleX(0.8767);left:1455.0px;top:185.6px;font-size:13.52px;color:#333;">Voice</span><div class="a" style="left:1505.0px;top:96px;width:1px;height:101px;background:#dedee2"></div><svg class="a" style="left:1525.0px;top:96.0px" width="30" height="36"><rect x="2" y="2" width="11" height="12" fill="none" stroke="#c0c0c0" stroke-width="1.6"/><rect x="16" y="2" width="11" height="12" fill="none" stroke="#c0c0c0" stroke-width="1.6"/><rect x="2" y="17" width="11" height="12" fill="none" stroke="#c0c0c0" stroke-width="1.6"/><rect x="16" y="17" width="11" height="12" fill="none" stroke="#c0c0c0" stroke-width="1.6"/></svg><span class="t" id="x105" style="transform:scaleX(0.9852);left:1519.0px;top:136.5px;font-size:14.83px;color:#b8b8b8;">Add</span><span class="t" id="x106" style="transform:scaleX(0.9165);left:1520.0px;top:185.6px;font-size:13.52px;color:#333;">Add-ins</span><div class="a" style="left:1579.0px;top:175px;width:1px;height:22px;background:#dedee2"></div><div class="a" style="left:1660.0px;top:175px;width:1px;height:22px;background:#dedee2"></div><svg class="a" style="left:1781.0px;top:184.0px" width="12" height="8"><path d="M1 1 L6.0 6.0 L11.0 1" stroke="#333" stroke-width="1.4" fill="none"/></svg><span class="t" id="x107" style="transform:scaleX(0.8250);left:11.5px;top:225.1px;font-size:15.26px;color:#333;">1</span><span class="t" id="x108" style="transform:scaleX(0.8250);left:11.5px;top:361.1px;font-size:15.26px;color:#c43e1c;">2</span><span class="t" id="x109" style="transform:scaleX(0.8250);left:11.5px;top:496.1px;font-size:15.26px;color:#333;">3</span><span class="t" id="x110" style="transform:scaleX(0.8250);left:11.5px;top:632.1px;font-size:15.26px;color:#333;">4</span><span class="t" id="x111" style="transform:scaleX(0.8250);left:11.5px;top:767.1px;font-size:15.26px;color:#333;">5</span><span class="t" id="x112" style="transform:scaleX(0.8250);left:11.5px;top:903.1px;font-size:15.26px;color:#333;">6</span><span class="t" id="x113" style="transform:scaleX(0.8250);left:11.5px;top:1035.6px;font-size:15.26px;color:#333;">7</span><span class="a" style="left:7px;top:241px;font:14px/14px 'Liberation Sans';color:#444">&#9733;</span><div class="a" style="left:38px;top:227px;width:197px;height:110px;background:#fff;border-radius:3px;box-shadow:0 0 0 1px rgba(0,0,0,.08),0 1px 2px rgba(0,0,0,.15);overflow:hidden"><div class="a" style="left:5px;top:11px;width:187px;height:1.5px;background:#bbb"></div><span class="t" id="x114" style="transform:scaleX(1.0282);left:26.0px;top:41.1px;font-size:7.63px;color:#333;font-family:'Liberation Serif',serif;-webkit-text-stroke:.2px #333;">Global Life Sciences Sector Opportunities:</span><span class="t" id="x115" style="transform:scaleX(1.0674);left:48.0px;top:49.1px;font-size:7.63px;color:#333;font-family:'Liberation Serif',serif;-webkit-text-stroke:.2px #333;">Landscape &amp; Recent Trends</span><span class="t" id="x116" style="transform:scaleX(0.9305);left:78.0px;top:75.9px;font-size:4.80px;color:#111;font-weight:bold;">Kamal Shahani</span><span class="t" id="x117" style="transform:scaleX(0.9342);left:62.0px;top:80.9px;font-size:4.80px;color:#111;font-weight:bold;">Founder &amp; Managing Director</span><span class="t" id="x118" style="transform:scaleX(0.8893);left:62.0px;top:86.4px;font-size:4.80px;color:#111;font-weight:bold;">Tvam Health Solutions Pvt. Ltd.</span><div class="a" style="left:0;bottom:0;width:197px;height:12px;background:linear-gradient(90deg,#0a2a70,#0a56c0 40%,#12a6f0 80%,#7d7d7d 81%,#8a8a8a)"></div></div><div class="a" style="left:33px;top:358px;width:207px;height:120px;border-radius:8px;border:4.5px solid #c0391c;box-sizing:border-box"></div><div class="a" style="left:38px;top:363px;width:197px;height:110px;background:#fff;overflow:hidden"><div class="a" style="left:0;top:0;width:1317px;height:741px;transform:scale(0.14958);transform-origin:0 0"><div class="a" style="left:0;top:0;width:1317px;height:741px;background:#fff;overflow:hidden"><div class="a" style="left:-200px;top:300px;width:1800px;height:60px;transform:rotate(-32deg);background:linear-gradient(rgba(230,232,238,0),rgba(228,230,236,.18),rgba(230,232,238,0))"></div><div class="a" style="left:200px;top:420px;width:1800px;height:90px;transform:rotate(-32deg);background:linear-gradient(rgba(230,232,238,0),rgba(230,232,238,.15),rgba(230,232,238,0))"></div><div class="a" style="left:-400px;top:520px;width:1800px;height:80px;transform:rotate(-32deg);background:linear-gradient(rgba(230,232,238,0),rgba(230,232,238,.15),rgba(230,232,238,0))"></div></div><div class="a" style="left:1147px;top:605px;width:348px;height:348px;border-radius:50%;background:rgba(150,175,235,.47)"></div><div class="a" style="left:1230.5px;top:687.5px;width:183px;height:183px;border-radius:50%;background:#f6f7fa"></div><div class="a" style="left:361px;top:0;width:956px;height:116px;background:linear-gradient(#0763c9,#1a7ad0 40%,#2a8fd6)"></div><div class="a" style="left:676px;top:8px;width:6px;height:102px;background:#fff"></div><span class="t"  style="transform:scaleX(0.9073);left:445.0px;top:39.6px;font-size:33.87px;color:#fff;font-weight:bold;">SKILL MAP</span><span class="t"  style="transform:scaleX(0.9215);left:724.6px;top:32.1px;font-size:23.26px;color:#f4f8ff;">IMPORTANT OPPORTUNITIES AND SKILLS REQUIRED</span><svg class="a" style="left:20.7px;top:14.7px" width="98" height="98"><defs><radialGradient id="gold" cx="50%" cy="50%" r="50%"><stop offset=".78" stop-color="#b87a1a"/><stop offset=".84" stop-color="#f0c460"/><stop offset=".93" stop-color="#d89a30"/><stop offset="1" stop-color="#f6dc8a"/></radialGradient><radialGradient id="blu" cx="45%" cy="38%" r="60%"><stop offset="0" stop-color="#3fb0ea"/><stop offset=".7" stop-color="#1d7fca"/><stop offset="1" stop-color="#155fa6"/></radialGradient></defs><ellipse cx="49" cy="49" rx="48" ry="46.5" fill="url(#gold)"/><ellipse cx="49" cy="49" rx="43" ry="41.5" fill="none" stroke="#6a4a18" stroke-width="3.5" stroke-dasharray="1.6 1.4" opacity=".55"/><circle cx="49" cy="49" r="39" fill="url(#blu)" stroke="#b8801e" stroke-width="1.2"/><path d="M20 35 C16 50,20 62,30 70" stroke="#8fb7c8" stroke-width="3" fill="none" stroke-dasharray="3 2" opacity=".7"/><path d="M78 35 C82 50,78 62,68 70" stroke="#8fb7c8" stroke-width="3" fill="none" stroke-dasharray="3 2" opacity=".7"/><path d="M25 68 L73 68 L69 73 L73 78 L25 78 L29 73Z" fill="#f2f2f2"/><rect x="36" y="71.5" width="26" height="3" fill="#555" opacity=".7"/></svg><span class="t"  style="transform:scaleX(1.1263);left:52.0px;top:38.6px;font-size:27.62px;color:#fff;font-weight:bold;">20</span><span class="t"  style="transform:scaleX(1.4212);left:54.0px;top:68.0px;font-size:6.54px;color:#eaf4ff;font-weight:bold;">YEARS</span><svg class="a" style="left:124px;top:45px" width="30" height="32"><g stroke="#8a8a8a" stroke-width="1"><path d="M4 13 L12 14 L20 5 M12 14 L19 24 M12 14 L6 23 M5 5 L10 11 M12 14 L3 20"/></g><circle cx="4" cy="13" r="2.8" fill="#5a5a5a"/><circle cx="12" cy="14" r="3.6" fill="#4a4a4a"/><circle cx="20" cy="5" r="2.6" fill="#5a5a5a"/><circle cx="19" cy="24" r="2.6" fill="#4a4a4a"/><circle cx="6" cy="23" r="1.5" fill="#999"/><circle cx="5" cy="5" r="1.3" fill="#999"/><circle cx="3" cy="20" r="1.2" fill="#aaa"/></svg><span class="t"  style="transform:scaleX(1.0772);left:149.4px;top:50.6px;font-size:16.72px;color:#3d8db5;font-weight:bold;"><span style="color:#2f8cc0">clini</span><span style="color:#6a8f66">minds</span></span><div class="a" style="left:163px;top:69px;width:72px;height:1.5px;background:#8a6fb8;opacity:.75"></div><span class="t"  style="transform:scaleX(0.9031);left:127.0px;top:76.3px;font-size:7.27px;color:#333;font-weight:bold;-webkit-text-stroke:.3px #333;">AN ISO 9001:2015 Certified Academy</span><span class="t"  style="transform:scaleX(0.7081);left:24.5px;top:120.4px;font-size:10.90px;color:#1a1a1a;font-weight:bold;-webkit-text-stroke:.5px #1a1a1a;">Leaders in Life Sciences Skills &amp; Training for Employment</span><div class="a" style="left:-20px;top:550px;width:360.5px;height:206px;background:linear-gradient(#176ce0,#3584e4 50%,#8ab6ee 85%,#bcd5f2)"></div><div class="a" style="left:-42.2px;top:234px;width:351.5px;height:420px;overflow:hidden;background:radial-gradient(ellipse 80% 70% at 45% 50%,#35526e,#2d4963 60%,#263f58)"><div class="a" style="left:0;top:0;width:351.5px;height:420px;background:linear-gradient(rgba(18,36,56,.6),rgba(18,36,56,0) 30%,rgba(18,36,56,0) 85%,rgba(18,32,50,.3))"></div><svg class="a" style="left:0;top:0;filter:blur(2.4px)" width="352" height="420"><defs><linearGradient id="hg" x1="0" y1="0" x2="0" y2="1"><stop offset="0" stop-color="#f3d2c8"/><stop offset=".5" stop-color="#dca494"/><stop offset="1" stop-color="#c98a80"/></linearGradient><linearGradient id="cg" x1="0" y1="0" x2="1" y2="0"><stop offset="0" stop-color="#a9bccf"/><stop offset=".45" stop-color="#dfe8f0"/><stop offset="1" stop-color="#b4c4d4"/></linearGradient></defs><path d="M310 214 L352 210 L352 342 L322 340 C318 300,312 260,310 214Z" fill="#121a29"/><path d="M70 225 C90 228,140 234,166 236 C180 232,190 228,201 225 C225 220,250 216,278 218 L278 279 C250 284,225 292,201 295 C190 296,180 297,175 296 C160 290,150 284,139 277 C128 268,120 262,113 256 C100 248,88 242,77 238 C66 234,64 228,70 225Z" fill="url(#hg)"/><path d="M166 266 C200 262,240 264,277 270" stroke="#8a5442" stroke-width="11" fill="none" opacity=".55"/><path d="M180 288 C210 286,240 282,270 280" stroke="#f0c8c0" stroke-width="4" fill="none" opacity=".6"/><ellipse cx="76" cy="230" rx="9" ry="5" fill="#f4e0dc"/><path d="M277 218 L312 216 L315 298 L279 300Z" fill="url(#cg)"/></svg></div><span class="t"  style="transform:scaleX(0.8773);left:78.6px;top:368.0px;font-size:29.51px;color:#fff;font-weight:bold;">SKILL MAP</span><svg class="a" style="left:0;top:0;overflow:visible" width="1317" height="741"><polyline points="461.0,174.0 706.0,174.0 762.0,270.0" fill="none" stroke="#0d82de" stroke-width="2.6" stroke-linejoin="miter"/><polyline points="1134.4,174.5 889.0,174.5 836.0,268.0" fill="none" stroke="#2e9e56" stroke-width="2.6" stroke-linejoin="miter"/><polyline points="461.0,383.0 690.0,383.0" fill="none" stroke="#f6a800" stroke-width="2.6" stroke-linejoin="miter"/><polyline points="905.0,383.0 1134.0,383.0" fill="none" stroke="#8b7ff0" stroke-width="2.6" stroke-linejoin="miter"/><polyline points="460.0,567.5 706.0,567.5 762.0,497.0" fill="none" stroke="#0d82de" stroke-width="2.6" stroke-linejoin="miter"/><polyline points="1150.0,566.0 904.0,566.0 851.0,489.0" fill="none" stroke="#2e9e56" stroke-width="2.6" stroke-linejoin="miter"/><circle cx="461.0" cy="174.0" r="9.3" fill="#0d84e0"/><circle cx="1134.4" cy="174.5" r="9.3" fill="#2e9e56"/><circle cx="461.0" cy="383.0" r="9.3" fill="#f6a800"/><circle cx="1134.0" cy="383.0" r="9.3" fill="#8b7ff0"/><circle cx="460.0" cy="567.5" r="9.3" fill="#0d84e0"/><circle cx="1150.0" cy="566.0" r="9.3" fill="#2e9e56"/><path d="M678.50 383.00 A118.5 118.5 0 0 1 797.00 264.50 L797.00 292.00 A91.0 91.0 0 0 0 706.00 383.00 Z" fill="#1c86df"/><path d="M797.00 264.50 A118.5 118.5 0 0 1 915.50 383.00 L888.00 383.00 A91.0 91.0 0 0 0 797.00 292.00 Z" fill="#2ea05a"/><path d="M797.00 501.50 A118.5 118.5 0 0 1 678.50 383.00 L706.00 383.00 A91.0 91.0 0 0 0 797.00 474.00 Z" fill="#fbb014"/><path d="M915.50 383.00 A118.5 118.5 0 0 1 797.00 501.50 L797.00 474.00 A91.0 91.0 0 0 0 888.00 383.00 Z" fill="#8e80f1"/><path d="M705.50 383.00 A91.5 91.5 0 0 1 797.00 291.50 L797.00 304.00 A79.0 79.0 0 0 0 718.00 383.00 Z" fill="#7cbaed"/><path d="M797.00 291.50 A91.5 91.5 0 0 1 888.50 383.00 L876.00 383.00 A79.0 79.0 0 0 0 797.00 304.00 Z" fill="#9ccfa6"/><path d="M797.00 474.50 A91.5 91.5 0 0 1 705.50 383.00 L718.00 383.00 A79.0 79.0 0 0 0 797.00 462.00 Z" fill="#fdd488"/><path d="M888.50 383.00 A91.5 91.5 0 0 1 797.00 474.50 L797.00 462.00 A79.0 79.0 0 0 0 876.00 383.00 Z" fill="#c6bdf6"/><circle cx="797" cy="383" r="79" fill="#fff"/></svg><span class="t"  style="transform:scaleX(0.8768);left:747.5px;top:361.1px;font-size:18.31px;color:#111;font-weight:bold;letter-spacing:1.5px;">SKILL MAP</span><span class="t"  style="transform:scaleX(0.9331);left:438.4px;top:196.1px;font-size:14.83px;color:#0d0d0d;font-weight:bold;">Clinical Trials &amp; Data Management</span><div class="a" style="left:448.5px;top:228.8px;width:3px;height:3px;border-radius:50%;background:#7a7a7a"></div><span class="t"  style="transform:scaleX(1.0472);left:459.0px;top:225.5px;font-size:10.61px;color:#6c6c6c;">GCP / Ethics Committee</span><div class="a" style="left:448.5px;top:247.1px;width:3px;height:3px;border-radius:50%;background:#7a7a7a"></div><span class="t"  style="transform:scaleX(1.1036);left:459.0px;top:243.8px;font-size:10.61px;color:#6c6c6c;">Advanced Monitoring</span><div class="a" style="left:448.5px;top:265.3px;width:3px;height:3px;border-radius:50%;background:#7a7a7a"></div><span class="t"  style="transform:scaleX(1.0927);left:459.0px;top:262.0px;font-size:10.61px;color:#6c6c6c;">Investigator Training</span><div class="a" style="left:448.5px;top:283.6px;width:3px;height:3px;border-radius:50%;background:#7a7a7a"></div><span class="t"  style="transform:scaleX(1.0679);left:459.0px;top:280.3px;font-size:10.61px;color:#6c6c6c;">Regulatory Pathway</span><div class="a" style="left:448.5px;top:301.8px;width:3px;height:3px;border-radius:50%;background:#7a7a7a"></div><span class="t"  style="transform:scaleX(1.0476);left:459.0px;top:298.5px;font-size:10.61px;color:#6c6c6c;">Essential Documents</span><div class="a" style="left:448.5px;top:320.0px;width:3px;height:3px;border-radius:50%;background:#7a7a7a"></div><span class="t"  style="transform:scaleX(1.0043);left:459.0px;top:316.8px;font-size:10.61px;color:#6c6c6c;">BA/BE</span><div class="a" style="left:448.5px;top:338.3px;width:3px;height:3px;border-radius:50%;background:#7a7a7a"></div><span class="t"  style="transform:scaleX(1.0472);left:459.0px;top:335.0px;font-size:10.61px;color:#6c6c6c;">End to End Clinical Trials</span><div class="a" style="left:448.5px;top:356.5px;width:3px;height:3px;border-radius:50%;background:#7a7a7a"></div><span class="t"  style="transform:scaleX(1.0704);left:459.0px;top:353.3px;font-size:10.61px;color:#6c6c6c;">Clinical Data Management</span><span class="t"  style="transform:scaleX(0.9026);left:1003.0px;top:192.5px;font-size:14.83px;color:#0d0d0d;font-weight:bold;">Pharmacovigilance</span><div class="a" style="left:956.0px;top:229.9px;width:3px;height:3px;border-radius:50%;background:#7a7a7a"></div><span class="t"  style="transform:scaleX(1.0085);left:966.0px;top:226.6px;font-size:10.61px;color:#6c6c6c;">ICSRs / Case Processing &amp; Safety Database</span><div class="a" style="left:956.0px;top:248.2px;width:3px;height:3px;border-radius:50%;background:#7a7a7a"></div><span class="t"  style="transform:scaleX(0.9918);left:966.0px;top:244.9px;font-size:10.61px;color:#6c6c6c;">CT Safety</span><div class="a" style="left:956.0px;top:266.4px;width:3px;height:3px;border-radius:50%;background:#7a7a7a"></div><span class="t"  style="transform:scaleX(1.0876);left:966.0px;top:263.1px;font-size:10.61px;color:#6c6c6c;">Aggregate Report Writing</span><div class="a" style="left:956.0px;top:284.7px;width:3px;height:3px;border-radius:50%;background:#7a7a7a"></div><span class="t"  style="transform:scaleX(1.0552);left:966.0px;top:281.4px;font-size:10.61px;color:#6c6c6c;">Signal Detection &amp; Risk</span><div class="a" style="left:956.0px;top:302.9px;width:3px;height:3px;border-radius:50%;background:#7a7a7a"></div><span class="t"  style="transform:scaleX(1.0947);left:966.0px;top:299.6px;font-size:10.61px;color:#6c6c6c;">Management</span><div class="a" style="left:956.0px;top:321.1px;width:3px;height:3px;border-radius:50%;background:#7a7a7a"></div><span class="t"  style="transform:scaleX(1.0443);left:966.0px;top:317.9px;font-size:10.61px;color:#6c6c6c;">Drug Safety Physician</span><div class="a" style="left:956.0px;top:339.4px;width:3px;height:3px;border-radius:50%;background:#7a7a7a"></div><span class="t"  style="transform:scaleX(1.0749);left:966.0px;top:336.1px;font-size:10.61px;color:#6c6c6c;">Pharmacovigilance Audits</span><span class="t"  style="transform:scaleX(0.8749);left:449.5px;top:404.5px;font-size:14.83px;color:#0d0d0d;font-weight:bold;">Business Analytics</span><div class="a" style="left:450.0px;top:450.3px;width:3px;height:3px;border-radius:50%;background:#7a7a7a"></div><span class="t"  style="transform:scaleX(1.0964);left:461.0px;top:447.0px;font-size:10.61px;color:#6c6c6c;">Competitive Intelligence</span><div class="a" style="left:450.0px;top:468.5px;width:3px;height:3px;border-radius:50%;background:#7a7a7a"></div><span class="t"  style="transform:scaleX(1.0426);left:461.0px;top:465.3px;font-size:10.61px;color:#6c6c6c;">Forecasting</span><div class="a" style="left:450.0px;top:486.8px;width:3px;height:3px;border-radius:50%;background:#7a7a7a"></div><span class="t"  style="transform:scaleX(0.9134);left:461.0px;top:483.5px;font-size:10.61px;color:#6c6c6c;">HEOR</span><div class="a" style="left:450.0px;top:505.0px;width:3px;height:3px;border-radius:50%;background:#7a7a7a"></div><span class="t"  style="transform:scaleX(0.7897);left:461.0px;top:501.8px;font-size:10.61px;color:#6c6c6c;">SFE</span><div class="a" style="left:450.0px;top:523.3px;width:3px;height:3px;border-radius:50%;background:#7a7a7a"></div><span class="t"  style="transform:scaleX(1.0607);left:461.0px;top:520.0px;font-size:10.61px;color:#6c6c6c;">Patient Level Data Analytics</span><div class="a" style="left:450.0px;top:541.5px;width:3px;height:3px;border-radius:50%;background:#7a7a7a"></div><span class="t"  style="transform:scaleX(1.0353);left:461.0px;top:538.3px;font-size:10.61px;color:#6c6c6c;">Primary Research</span><span class="t"  style="transform:scaleX(0.9302);left:391.0px;top:591.5px;font-size:14.83px;color:#0d0d0d;font-weight:bold;">Medical Affairs, Medical Writing &amp; Biostatistics</span><div class="a" style="left:460.2px;top:628.9px;width:3px;height:3px;border-radius:50%;background:#7a7a7a"></div><span class="t"  style="transform:scaleX(1.1032);left:470.5px;top:625.6px;font-size:10.61px;color:#6c6c6c;">Medical Affairs</span><div class="a" style="left:460.2px;top:647.1px;width:3px;height:3px;border-radius:50%;background:#7a7a7a"></div><span class="t"  style="transform:scaleX(1.1014);left:470.5px;top:643.9px;font-size:10.61px;color:#6c6c6c;">Medical &amp; Scientific Writing</span><div class="a" style="left:460.2px;top:665.4px;width:3px;height:3px;border-radius:50%;background:#7a7a7a"></div><span class="t"  style="transform:scaleX(1.0676);left:470.5px;top:662.1px;font-size:10.61px;color:#6c6c6c;">Biostatistics</span><span class="t"  style="transform:scaleX(0.9196);left:992.0px;top:395.5px;font-size:14.83px;color:#0d0d0d;font-weight:bold;">Medical Devices &amp;</span><span class="t"  style="transform:scaleX(0.9124);left:1005.6px;top:414.0px;font-size:14.83px;color:#0d0d0d;font-weight:bold;">Drug Regulatory</span><div class="a" style="left:950.5px;top:450.3px;width:3px;height:3px;border-radius:50%;background:#7a7a7a"></div><span class="t"  style="transform:scaleX(1.0213);left:961.0px;top:447.0px;font-size:10.61px;color:#6c6c6c;">ISO13485</span><div class="a" style="left:950.5px;top:468.5px;width:3px;height:3px;border-radius:50%;background:#7a7a7a"></div><span class="t"  style="transform:scaleX(1.0577);left:961.0px;top:465.3px;font-size:10.61px;color:#6c6c6c;">Medical Device Clinical Trials</span><div class="a" style="left:950.5px;top:486.8px;width:3px;height:3px;border-radius:50%;background:#7a7a7a"></div><span class="t"  style="transform:scaleX(1.0488);left:961.0px;top:483.5px;font-size:10.61px;color:#6c6c6c;">EUMDR &amp; Other Device Regulations</span><div class="a" style="left:950.5px;top:505.0px;width:3px;height:3px;border-radius:50%;background:#7a7a7a"></div><span class="t"  style="transform:scaleX(1.0602);left:961.0px;top:501.8px;font-size:10.61px;color:#6c6c6c;">Drug Regulatory</span><div class="a" style="left:950.5px;top:523.3px;width:3px;height:3px;border-radius:50%;background:#7a7a7a"></div><span class="t"  style="transform:scaleX(0.9416);left:961.0px;top:520.0px;font-size:10.61px;color:#6c6c6c;">eCTD</span><span class="t"  style="transform:scaleX(0.9111);left:930.0px;top:591.5px;font-size:14.83px;color:#0d0d0d;font-weight:bold;">GxP Audits &amp; Inspection Preparedness</span><div class="a" style="left:929.2px;top:629.3px;width:3px;height:3px;border-radius:50%;background:#7a7a7a"></div><span class="t"  style="transform:scaleX(0.8957);left:939.4px;top:626.0px;font-size:10.61px;color:#6c6c6c;">GCP</span><div class="a" style="left:929.2px;top:647.5px;width:3px;height:3px;border-radius:50%;background:#7a7a7a"></div><span class="t"  style="transform:scaleX(1.0343);left:939.4px;top:644.3px;font-size:10.61px;color:#6c6c6c;">GMP</span><div class="a" style="left:929.2px;top:665.8px;width:3px;height:3px;border-radius:50%;background:#7a7a7a"></div><span class="t"  style="transform:scaleX(0.9042);left:939.4px;top:662.5px;font-size:10.61px;color:#6c6c6c;">GLP</span><div class="a" style="left:929.2px;top:684.0px;width:3px;height:3px;border-radius:50%;background:#7a7a7a"></div><span class="t"  style="transform:scaleX(0.9640);left:939.4px;top:680.8px;font-size:10.61px;color:#6c6c6c;">GVP</span><div class="a" style="left:929.2px;top:702.3px;width:3px;height:3px;border-radius:50%;background:#7a7a7a"></div><span class="t"  style="transform:scaleX(1.0598);left:939.4px;top:699.0px;font-size:10.61px;color:#6c6c6c;">Computer System Validation / 21 CFR Part 11</span><div class="a" style="left:929.2px;top:720.5px;width:3px;height:3px;border-radius:50%;background:#7a7a7a"></div><span class="t"  style="transform:scaleX(1.0597);left:939.4px;top:717.3px;font-size:10.61px;color:#6c6c6c;">Audits &amp; Inspections Preparedness</span></div></div><svg class="a" style="left:144px;top:426px" width="16" height="22"><path d="M1.5 1.5 L1.5 17 L5.5 13.5 L8.5 20 L11 19 L8.2 12.5 L13.5 12.5Z" fill="#fff" stroke="#111" stroke-width="1.4" stroke-linejoin="round"/></svg><div class="a" style="left:38px;top:498px;width:197px;height:110px;background:#fff;border-radius:3px;box-shadow:0 0 0 1px rgba(0,0,0,.08),0 1px 2px rgba(0,0,0,.15);overflow:hidden"><span class="t" id="x119" style="transform:scaleX(0.9700);left:20.0px;top:5.2px;font-size:6.87px;color:#111;font-weight:bold;font-family:'Liberation Serif',serif;-webkit-text-stroke:.35px #111;">Global &amp; Indian Pharmaceutical Industry Market Size</span><div class="a" style="left:10px;top:13px;width:177px;height:1px;background:#999"></div><div class="a" style="left:20px;top:21px;width:145px;height:71px;background:#dfe3ea"></div><div class="a" style="left:20px;top:21px;width:72px;height:71px;background:#3a6fd0"></div><div class="a" style="left:20px;top:21px;width:145px;height:8px;background:#3468cc"></div><div class="a" style="left:20px;top:29.0px;width:145px;height:.8px;background:#fff"></div><div class="a" style="left:24px;top:32.5px;width:30px;height:1px;background:#c7d4f0"></div><div class="a" style="left:96px;top:32.5px;width:20px;height:1px;background:#aaa"></div><div class="a" style="left:20px;top:36.9px;width:145px;height:.8px;background:#fff"></div><div class="a" style="left:24px;top:40.4px;width:30px;height:1px;background:#c7d4f0"></div><div class="a" style="left:96px;top:40.4px;width:20px;height:1px;background:#aaa"></div><div class="a" style="left:20px;top:44.8px;width:145px;height:.8px;background:#fff"></div><div class="a" style="left:24px;top:48.3px;width:30px;height:1px;background:#c7d4f0"></div><div class="a" style="left:96px;top:48.3px;width:20px;height:1px;background:#aaa"></div><div class="a" style="left:20px;top:52.7px;width:145px;height:.8px;background:#fff"></div><div class="a" style="left:24px;top:56.2px;width:30px;height:1px;background:#c7d4f0"></div><div class="a" style="left:96px;top:56.2px;width:20px;height:1px;background:#aaa"></div><div class="a" style="left:20px;top:60.6px;width:145px;height:.8px;background:#fff"></div><div class="a" style="left:24px;top:64.1px;width:30px;height:1px;background:#c7d4f0"></div><div class="a" style="left:96px;top:64.1px;width:20px;height:1px;background:#aaa"></div><div class="a" style="left:20px;top:68.5px;width:145px;height:.8px;background:#fff"></div><div class="a" style="left:24px;top:72.0px;width:30px;height:1px;background:#c7d4f0"></div><div class="a" style="left:96px;top:72.0px;width:20px;height:1px;background:#aaa"></div><div class="a" style="left:20px;top:76.4px;width:145px;height:.8px;background:#fff"></div><div class="a" style="left:24px;top:79.9px;width:30px;height:1px;background:#c7d4f0"></div><div class="a" style="left:96px;top:79.9px;width:20px;height:1px;background:#aaa"></div><div class="a" style="left:20px;top:84.3px;width:145px;height:.8px;background:#fff"></div><div class="a" style="left:24px;top:87.8px;width:30px;height:1px;background:#c7d4f0"></div><div class="a" style="left:96px;top:87.8px;width:20px;height:1px;background:#aaa"></div><div class="a" style="left:0;bottom:0;width:197px;height:12px;background:linear-gradient(90deg,#0a2a70,#0a56c0 40%,#12a6f0 80%,#7d7d7d 81%,#8a8a8a)"></div></div><div class="a" style="left:38px;top:634px;width:197px;height:110px;background:#fff;border-radius:3px;box-shadow:0 0 0 1px rgba(0,0,0,.08),0 1px 2px rgba(0,0,0,.15);overflow:hidden"><span class="t" id="x120" style="transform:scaleX(1.0906);left:78.0px;top:3.5px;font-size:6.54px;color:#2d58c8;font-weight:bold;">Why India?</span><div class="a" style="left:8px;top:12px;width:181px;height:1px;background:#aaa"></div><div class="a" style="left:12px;top:18.0px;width:118px;height:1.2px;background:#d0d0d0"></div><div class="a" style="left:12px;top:25.6px;width:130px;height:1.2px;background:#d0d0d0"></div><div class="a" style="left:12px;top:33.2px;width:140px;height:1.2px;background:#d0d0d0"></div><div class="a" style="left:12px;top:40.8px;width:108px;height:1.2px;background:#d0d0d0"></div><div class="a" style="left:12px;top:48.4px;width:150px;height:1.2px;background:#d0d0d0"></div><div class="a" style="left:12px;top:56.0px;width:112px;height:1.2px;background:#d0d0d0"></div><div class="a" style="left:0;bottom:0;width:197px;height:12px;background:linear-gradient(90deg,#0a2a70,#0a56c0 40%,#12a6f0 80%,#7d7d7d 81%,#8a8a8a)"></div></div><div class="a" style="left:38px;top:770px;width:197px;height:110px;background:#fff;border-radius:3px;box-shadow:0 0 0 1px rgba(0,0,0,.08),0 1px 2px rgba(0,0,0,.15);overflow:hidden"><span class="t" id="x121" style="transform:scaleX(1.0164);left:14.0px;top:3.6px;font-size:6.41px;color:#111;font-weight:bold;font-family:'Liberation Serif',serif;-webkit-text-stroke:.35px #111;">Top 10 Global Pharma Companies</span><div class="a" style="left:8px;top:11px;width:181px;height:1px;background:#999"></div><div class="a" style="left:10px;top:14px;width:175px;height:82px;background:#e8e6e6"></div><div class="a" style="left:14px;top:20px;width:8px;height:1.2px;background:#b8b8b8"></div><div class="a" style="left:30px;top:20px;width:30px;height:1.2px;background:#b8b8b8"></div><div class="a" style="left:78px;top:20px;width:45px;height:1.2px;background:#b8b8b8"></div><div class="a" style="left:135px;top:20px;width:25px;height:1.2px;background:#b8b8b8"></div><div class="a" style="left:165px;top:20px;width:15px;height:1.2px;background:#b8b8b8"></div><div class="a" style="left:14px;top:27px;width:8px;height:1.2px;background:#b8b8b8"></div><div class="a" style="left:30px;top:27px;width:30px;height:1.2px;background:#b8b8b8"></div><div class="a" style="left:78px;top:27px;width:45px;height:1.2px;background:#b8b8b8"></div><div class="a" style="left:135px;top:27px;width:25px;height:1.2px;background:#b8b8b8"></div><div class="a" style="left:165px;top:27px;width:15px;height:1.2px;background:#b8b8b8"></div><div class="a" style="left:14px;top:34px;width:8px;height:1.2px;background:#b8b8b8"></div><div class="a" style="left:30px;top:34px;width:30px;height:1.2px;background:#b8b8b8"></div><div class="a" style="left:78px;top:34px;width:45px;height:1.2px;background:#b8b8b8"></div><div class="a" style="left:135px;top:34px;width:25px;height:1.2px;background:#b8b8b8"></div><div class="a" style="left:165px;top:34px;width:15px;height:1.2px;background:#b8b8b8"></div><div class="a" style="left:14px;top:41px;width:8px;height:1.2px;background:#b8b8b8"></div><div class="a" style="left:30px;top:41px;width:30px;height:1.2px;background:#b8b8b8"></div><div class="a" style="left:78px;top:41px;width:45px;height:1.2px;background:#b8b8b8"></div><div class="a" style="left:135px;top:41px;width:25px;height:1.2px;background:#b8b8b8"></div><div class="a" style="left:165px;top:41px;width:15px;height:1.2px;background:#b8b8b8"></div><div class="a" style="left:14px;top:48px;width:8px;height:1.2px;background:#b8b8b8"></div><div class="a" style="left:30px;top:48px;width:30px;height:1.2px;background:#b8b8b8"></div><div class="a" style="left:78px;top:48px;width:45px;height:1.2px;background:#b8b8b8"></div><div class="a" style="left:135px;top:48px;width:25px;height:1.2px;background:#b8b8b8"></div><div class="a" style="left:165px;top:48px;width:15px;height:1.2px;background:#b8b8b8"></div><div class="a" style="left:14px;top:55px;width:8px;height:1.2px;background:#b8b8b8"></div><div class="a" style="left:30px;top:55px;width:30px;height:1.2px;background:#b8b8b8"></div><div class="a" style="left:78px;top:55px;width:45px;height:1.2px;background:#b8b8b8"></div><div class="a" style="left:135px;top:55px;width:25px;height:1.2px;background:#b8b8b8"></div><div class="a" style="left:165px;top:55px;width:15px;height:1.2px;background:#b8b8b8"></div><div class="a" style="left:14px;top:62px;width:8px;height:1.2px;background:#b8b8b8"></div><div class="a" style="left:30px;top:62px;width:30px;height:1.2px;background:#b8b8b8"></div><div class="a" style="left:78px;top:62px;width:45px;height:1.2px;background:#b8b8b8"></div><div class="a" style="left:135px;top:62px;width:25px;height:1.2px;background:#b8b8b8"></div><div class="a" style="left:165px;top:62px;width:15px;height:1.2px;background:#b8b8b8"></div><div class="a" style="left:14px;top:69px;width:8px;height:1.2px;background:#b8b8b8"></div><div class="a" style="left:30px;top:69px;width:30px;height:1.2px;background:#b8b8b8"></div><div class="a" style="left:78px;top:69px;width:45px;height:1.2px;background:#b8b8b8"></div><div class="a" style="left:135px;top:69px;width:25px;height:1.2px;background:#b8b8b8"></div><div class="a" style="left:165px;top:69px;width:15px;height:1.2px;background:#b8b8b8"></div><div class="a" style="left:14px;top:76px;width:8px;height:1.2px;background:#b8b8b8"></div><div class="a" style="left:30px;top:76px;width:30px;height:1.2px;background:#b8b8b8"></div><div class="a" style="left:78px;top:76px;width:45px;height:1.2px;background:#b8b8b8"></div><div class="a" style="left:135px;top:76px;width:25px;height:1.2px;background:#b8b8b8"></div><div class="a" style="left:165px;top:76px;width:15px;height:1.2px;background:#b8b8b8"></div><div class="a" style="left:14px;top:83px;width:8px;height:1.2px;background:#b8b8b8"></div><div class="a" style="left:30px;top:83px;width:30px;height:1.2px;background:#b8b8b8"></div><div class="a" style="left:78px;top:83px;width:45px;height:1.2px;background:#b8b8b8"></div><div class="a" style="left:135px;top:83px;width:25px;height:1.2px;background:#b8b8b8"></div><div class="a" style="left:165px;top:83px;width:15px;height:1.2px;background:#b8b8b8"></div><div class="a" style="left:14px;top:90px;width:8px;height:1.2px;background:#b8b8b8"></div><div class="a" style="left:30px;top:90px;width:30px;height:1.2px;background:#b8b8b8"></div><div class="a" style="left:78px;top:90px;width:45px;height:1.2px;background:#b8b8b8"></div><div class="a" style="left:135px;top:90px;width:25px;height:1.2px;background:#b8b8b8"></div><div class="a" style="left:165px;top:90px;width:15px;height:1.2px;background:#b8b8b8"></div><div class="a" style="left:0;bottom:0;width:197px;height:12px;background:linear-gradient(90deg,#0a2a70,#0a56c0 40%,#12a6f0 80%,#7d7d7d 81%,#8a8a8a)"></div></div><div class="a" style="left:38px;top:905px;width:197px;height:110px;background:#fff;border-radius:3px;box-shadow:0 0 0 1px rgba(0,0,0,.08),0 1px 2px rgba(0,0,0,.15);overflow:hidden"><span class="t" id="x122" style="transform:scaleX(0.8288);left:62.0px;top:3.6px;font-size:6.41px;color:#111;font-weight:bold;font-family:'Liberation Serif',serif;-webkit-text-stroke:.35px #111;">Top 10 Indian Pharma Companies</span><div class="a" style="left:8px;top:11px;width:181px;height:1px;background:#999"></div><div class="a" style="left:10px;top:14px;width:165px;height:82px;background:#e8e6e6"></div><div class="a" style="left:14px;top:20px;width:8px;height:1.2px;background:#b8b8b8"></div><div class="a" style="left:30px;top:20px;width:30px;height:1.2px;background:#b8b8b8"></div><div class="a" style="left:78px;top:20px;width:45px;height:1.2px;background:#b8b8b8"></div><div class="a" style="left:135px;top:20px;width:25px;height:1.2px;background:#b8b8b8"></div><div class="a" style="left:165px;top:20px;width:15px;height:1.2px;background:#b8b8b8"></div><div class="a" style="left:14px;top:27px;width:8px;height:1.2px;background:#b8b8b8"></div><div class="a" style="left:30px;top:27px;width:30px;height:1.2px;background:#b8b8b8"></div><div class="a" style="left:78px;top:27px;width:45px;height:1.2px;background:#b8b8b8"></div><div class="a" style="left:135px;top:27px;width:25px;height:1.2px;background:#b8b8b8"></div><div class="a" style="left:165px;top:27px;width:15px;height:1.2px;background:#b8b8b8"></div><div class="a" style="left:14px;top:34px;width:8px;height:1.2px;background:#b8b8b8"></div><div class="a" style="left:30px;top:34px;width:30px;height:1.2px;background:#b8b8b8"></div><div class="a" style="left:78px;top:34px;width:45px;height:1.2px;background:#b8b8b8"></div><div class="a" style="left:135px;top:34px;width:25px;height:1.2px;background:#b8b8b8"></div><div class="a" style="left:165px;top:34px;width:15px;height:1.2px;background:#b8b8b8"></div><div class="a" style="left:14px;top:41px;width:8px;height:1.2px;background:#b8b8b8"></div><div class="a" style="left:30px;top:41px;width:30px;height:1.2px;background:#b8b8b8"></div><div class="a" style="left:78px;top:41px;width:45px;height:1.2px;background:#b8b8b8"></div><div class="a" style="left:135px;top:41px;width:25px;height:1.2px;background:#b8b8b8"></div><div class="a" style="left:165px;top:41px;width:15px;height:1.2px;background:#b8b8b8"></div><div class="a" style="left:14px;top:48px;width:8px;height:1.2px;background:#b8b8b8"></div><div class="a" style="left:30px;top:48px;width:30px;height:1.2px;background:#b8b8b8"></div><div class="a" style="left:78px;top:48px;width:45px;height:1.2px;background:#b8b8b8"></div><div class="a" style="left:135px;top:48px;width:25px;height:1.2px;background:#b8b8b8"></div><div class="a" style="left:165px;top:48px;width:15px;height:1.2px;background:#b8b8b8"></div><div class="a" style="left:14px;top:55px;width:8px;height:1.2px;background:#b8b8b8"></div><div class="a" style="left:30px;top:55px;width:30px;height:1.2px;background:#b8b8b8"></div><div class="a" style="left:78px;top:55px;width:45px;height:1.2px;background:#b8b8b8"></div><div class="a" style="left:135px;top:55px;width:25px;height:1.2px;background:#b8b8b8"></div><div class="a" style="left:165px;top:55px;width:15px;height:1.2px;background:#b8b8b8"></div><div class="a" style="left:14px;top:62px;width:8px;height:1.2px;background:#b8b8b8"></div><div class="a" style="left:30px;top:62px;width:30px;height:1.2px;background:#b8b8b8"></div><div class="a" style="left:78px;top:62px;width:45px;height:1.2px;background:#b8b8b8"></div><div class="a" style="left:135px;top:62px;width:25px;height:1.2px;background:#b8b8b8"></div><div class="a" style="left:165px;top:62px;width:15px;height:1.2px;background:#b8b8b8"></div><div class="a" style="left:14px;top:69px;width:8px;height:1.2px;background:#b8b8b8"></div><div class="a" style="left:30px;top:69px;width:30px;height:1.2px;background:#b8b8b8"></div><div class="a" style="left:78px;top:69px;width:45px;height:1.2px;background:#b8b8b8"></div><div class="a" style="left:135px;top:69px;width:25px;height:1.2px;background:#b8b8b8"></div><div class="a" style="left:165px;top:69px;width:15px;height:1.2px;background:#b8b8b8"></div><div class="a" style="left:14px;top:76px;width:8px;height:1.2px;background:#b8b8b8"></div><div class="a" style="left:30px;top:76px;width:30px;height:1.2px;background:#b8b8b8"></div><div class="a" style="left:78px;top:76px;width:45px;height:1.2px;background:#b8b8b8"></div><div class="a" style="left:135px;top:76px;width:25px;height:1.2px;background:#b8b8b8"></div><div class="a" style="left:165px;top:76px;width:15px;height:1.2px;background:#b8b8b8"></div><div class="a" style="left:14px;top:83px;width:8px;height:1.2px;background:#b8b8b8"></div><div class="a" style="left:30px;top:83px;width:30px;height:1.2px;background:#b8b8b8"></div><div class="a" style="left:78px;top:83px;width:45px;height:1.2px;background:#b8b8b8"></div><div class="a" style="left:135px;top:83px;width:25px;height:1.2px;background:#b8b8b8"></div><div class="a" style="left:165px;top:83px;width:15px;height:1.2px;background:#b8b8b8"></div><div class="a" style="left:14px;top:90px;width:8px;height:1.2px;background:#b8b8b8"></div><div class="a" style="left:30px;top:90px;width:30px;height:1.2px;background:#b8b8b8"></div><div class="a" style="left:78px;top:90px;width:45px;height:1.2px;background:#b8b8b8"></div><div class="a" style="left:135px;top:90px;width:25px;height:1.2px;background:#b8b8b8"></div><div class="a" style="left:165px;top:90px;width:15px;height:1.2px;background:#b8b8b8"></div><div class="a" style="left:0;bottom:0;width:197px;height:12px;background:linear-gradient(90deg,#0a2a70,#0a56c0 40%,#12a6f0 80%,#7d7d7d 81%,#8a8a8a)"></div></div><div class="a" style="left:38px;top:1040px;width:197px;height:14px;background:#fff;border-radius:3px;box-shadow:0 0 0 1px rgba(0,0,0,.08),0 1px 2px rgba(0,0,0,.15);overflow:hidden"><span class="t" id="x123" style="transform:scaleX(0.8256);left:62.0px;top:2.1px;font-size:5.81px;color:#222;font-weight:bold;">Clinical Trial Outsourcing Trends</span></div><svg class="a" style="left:263px;top:209px" width="12" height="10"><path d="M1 8 L6 2 L11 8Z" fill="#666"/></svg><div class="a" style="left:264px;top:224px;width:10px;height:147px;border-radius:5px;background:#6e6e72"></div><svg class="a" style="left:263px;top:1034px" width="12" height="10"><path d="M1 2 L6 8 L11 2Z" fill="#666"/></svg><div class="a" style="left:0;top:1049px;width:1811px;height:13px;background:#eeeef2"></div><svg class="a" style="left:290px;top:982px" width="10" height="12"><path d="M8 1 L2 6 L8 11Z" fill="#666"/></svg><div class="a" style="left:305px;top:984px;width:1417px;height:9px;border-radius:5px;background:#717174"></div><svg class="a" style="left:1779px;top:982px" width="10" height="12"><path d="M2 1 L8 6 L2 11Z" fill="#666"/></svg><svg class="a" style="left:1798px;top:209px" width="12" height="10"><path d="M1 8 L6 2 L11 8Z" fill="#666"/></svg><div class="a" style="left:1799px;top:245px;width:10px;height:20px;border-radius:5px;background:#6e6e72"></div><svg class="a" style="left:1798px;top:922px" width="12" height="52"><path d="M1 2 L6 8 L11 2Z" fill="#666"/><path d="M1 30 L6 24 L11 30Z M1 24 L6 18 L11 24Z" fill="#666"/><path d="M1 38 L6 44 L11 38Z M1 44 L6 50 L11 44Z" fill="#666"/></svg><span class="a" style="left:1598px;top:944px;font:bold 64px/80px 'Liberation Sans';letter-spacing:-1px;color:rgba(255,255,255,.3);transform:scaleX(1.2);transform-origin:0 0">zoom</span><div class="a" style="left:282px;top:1000px;width:1529px;height:1px;background:#dcdce0"></div><span class="t" id="x124" style="transform:scaleX(0.9337);left:296.0px;top:1012.8px;font-size:18.60px;color:#555;">Click to add notes</span><span class="t" id="x125" style="transform:scaleX(0.8612);left:10.0px;top:1053.7px;font-size:14.53px;color:#333;">Slide 2 of 24</span><span class="t" id="x126" style="transform:scaleX(0.8190);left:119.0px;top:1053.7px;font-size:14.53px;color:#333;">English (India)</span><svg class="a" style="left:216px;top:1049px" width="18" height="14"><circle cx="7" cy="3" r="2.3" fill="none" stroke="#444" stroke-width="1.3"/><path d="M1 7 L13 7 M7 7 L7 10 L4 14 M7 10 L10 14" stroke="#444" stroke-width="1.3" fill="none"/><circle cx="13" cy="10" r="3" fill="none" stroke="#444" stroke-width="1.2"/></svg><span class="t" id="x127" style="transform:scaleX(0.8431);left:238.5px;top:1053.7px;font-size:14.53px;color:#333;">Accessibility Unavailable</span><svg class="a" style="left:1305px;top:1050px" width="24" height="14"><path d="M5 6 L10 2 L15 6" stroke="#333" stroke-width="1.4" fill="none"/><path d="M1 9 L21 9" stroke="#333" stroke-width="2"/></svg><span class="t" id="x128" style="transform:scaleX(0.8438);left:1328.0px;top:1053.7px;font-size:14.53px;color:#333;">Notes</span><div class="a" style="left:1386px;top:1050px;width:47px;height:14px;background:#dcdce0;border-radius:3px"></div><svg class="a" style="left:1400px;top:1051px" width="18" height="12"><rect x="1.5" y="1.5" width="15" height="12" fill="none" stroke="#444" stroke-width="1.5"/><rect x="5" y="4.5" width="8" height="5" fill="#444"/></svg><svg class="a" style="left:1448px;top:1051px" width="18" height="12"><rect x="1" y="2" width="6" height="5" fill="none" stroke="#444" stroke-width="1.4"/><rect x="10" y="2" width="6" height="5" fill="none" stroke="#444" stroke-width="1.4"/><rect x="1" y="10" width="6" height="5" fill="none" stroke="#444" stroke-width="1.4"/><rect x="10" y="10" width="6" height="5" fill="none" stroke="#444" stroke-width="1.4"/></svg><svg class="a" style="left:1494px;top:1051px" width="18" height="12"><path d="M1 2 L8 2 L9 3 L10 2 L17 2 L17 14 L1 14Z M9 3 L9 14" fill="none" stroke="#444" stroke-width="1.4"/></svg><svg class="a" style="left:1542px;top:1051px" width="18" height="12"><rect x="1.5" y="1.5" width="15" height="9" fill="none" stroke="#444" stroke-width="1.5"/><path d="M5 6 L13 6" stroke="#444" stroke-width="1.4"/></svg><div class="a" style="left:1582px;top:1058px;width:8px;height:1.5px;background:#444"></div><div class="a" style="left:1597px;top:1058px;width:118px;height:1px;background:#777"></div><div class="a" style="left:1656px;top:1053px;width:5px;height:10px;background:#444;border-radius:1px"></div><span class="t" id="x129" style="transform:scaleX(1.1779);left:1720.0px;top:1052.9px;font-size:13.08px;color:#444;">+</span><span class="t" id="x130" style="transform:scaleX(0.8319);left:1745.0px;top:1053.7px;font-size:14.53px;color:#333;">116%</span><svg class="a" style="left:1788px;top:1050px" width="20" height="14"><rect x="2" y="4" width="14" height="10" fill="none" stroke="#444" stroke-width="1.4"/><path d="M6 4 L6 1 L12 1 L12 4" stroke="#444" stroke-width="1.3" fill="none"/></svg><div class="a" style="left:1547px;top:0;width:264px;height:174px;overflow:hidden;background:linear-gradient(90deg,#e3e3e4,#e9e9ea 40%,#e6e6e7)"><div class="a" style="left:190px;top:-60px;width:45px;height:300px;transform:rotate(-38deg);background:linear-gradient(90deg,rgba(255,255,255,0),rgba(250,250,250,.9),rgba(255,255,255,0));filter:blur(4px)"></div><div class="a" style="left:0;top:0;width:264px;height:174px;filter:blur(2.2px)"><div class="a" style="left:38px;top:118px;width:250px;height:110px;border-radius:45% 40% 0 0/55% 35% 0 0;background:linear-gradient(100deg,#2a3644,#343f4c 50%,#202a36)"></div><div class="a" style="left:128px;top:108px;width:80px;height:34px;background:#6b5046;border-radius:0 0 45% 45%"></div><div class="a" style="left:114px;top:20px;width:96px;height:126px;border-radius:46% 46% 44% 44%/38% 38% 62% 62%;background:radial-gradient(ellipse 60% 55% at 50% 40%,#c4a898,#b09080 55%,#957565)"></div><div class="a" style="left:112px;top:-30px;width:100px;height:64px;border-radius:50% 50% 40% 40%/60% 60% 40% 40%;background:radial-gradient(ellipse at 50% 35%,#f2f2f2,#dedede 60%,#cacaca)"></div><div class="a" style="left:108px;top:22px;width:16px;height:44px;border-radius:50%;background:#cfcfcf"></div><div class="a" style="left:200px;top:22px;width:16px;height:44px;border-radius:50%;background:#cfcfcf"></div><div class="a" style="left:104px;top:62px;width:12px;height:26px;border-radius:50%;background:#a38272"></div><div class="a" style="left:208px;top:62px;width:12px;height:26px;border-radius:50%;background:#a38272"></div><div class="a" style="left:128px;top:70px;width:26px;height:8px;border-radius:50%;background:#6d5248"></div><div class="a" style="left:171px;top:70px;width:26px;height:8px;border-radius:50%;background:#6d5248"></div><div class="a" style="left:152px;top:80px;width:20px;height:26px;border-radius:40%;background:linear-gradient(#b89a8a,#8e6e60)"></div><div class="a" style="left:138px;top:112px;width:48px;height:9px;border-radius:50%;background:#5f4038"></div></div><svg class="a" style="left:110px;top:58px;filter:blur(.8px)" width="110" height="36"><rect x="8" y="5" width="43" height="25" rx="6" fill="rgba(230,225,222,.18)" stroke="#d6d6d6" stroke-width="1.6"/><rect x="58" y="5" width="43" height="25" rx="6" fill="rgba(230,225,222,.18)" stroke="#d6d6d6" stroke-width="1.6"/><path d="M51 10 L58 10 M1 8 L8 8 M101 8 L109 8" stroke="#cfcfcf" stroke-width="1.5"/></svg><svg class="a" style="left:8px;top:2px" width="28" height="26"><g stroke="#777" stroke-width="1"><path d="M3 12 L11 12 L18 4 M11 12 L17 21 M11 12 L5 19"/></g><circle cx="3" cy="12" r="2.6" fill="#3a7a50"/><circle cx="11" cy="12" r="3" fill="#3a7a50"/><circle cx="18" cy="4" r="2.4" fill="#3a7a50"/><circle cx="17" cy="21" r="2.4" fill="#3a7a50"/></svg></div><span class="t" id="x131" style="transform:scaleX(1.0585);left:1578.0px;top:4.7px;font-size:14.53px;color:#2f86b8;font-weight:bold;"><span style="color:#2f86b8">clini</span><span style="color:#6a9a4a">minds</span></span><div class="a" style="left:1580px;top:19.5px;width:68px;height:1.5px;background:#7a6aa8;opacity:.6"></div><span class="t" id="x132" style="transform:scaleX(0.8672);left:1559.0px;top:24.7px;font-size:6.25px;color:#333;font-weight:bold;">AN ISO 9001:2015 Certified Academy</span><div class="a" style="left:1547px;top:152.5px;width:117px;height:18px;background:rgba(40,40,40,.85)"></div><span class="t" id="x133" style="transform:scaleX(0.8817);left:1554.5px;top:154.4px;font-size:16.72px;color:#fff;font-weight:bold;">kamal shahani</span></body></html>
